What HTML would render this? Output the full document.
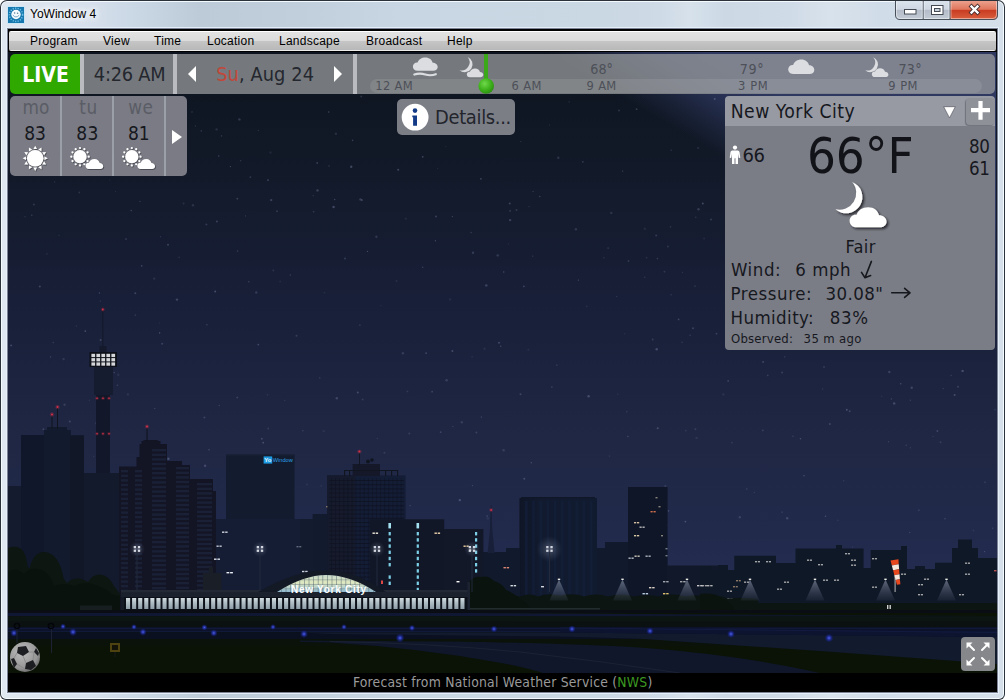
<!DOCTYPE html>
<html lang="en">
<head>
<meta charset="utf-8">
<title>YoWindow 4</title>
<style>
html,body{margin:0;padding:0;}
body{width:1005px;height:700px;overflow:hidden;position:relative;background:#fff;font-family:"Liberation Sans",sans-serif;}
.abs{position:absolute;}
#frame{left:0;top:0;width:1005px;height:700px;box-sizing:border-box;border-radius:7px 7px 6px 6px;
 background:linear-gradient(to right,#dfe7f0 0px,#d6e0ec 90px,#cbd8e5 130px,#bdcbd9 200px,#c1cfdd 300px,#c8d5e2 400px,#cad8e4 600px,#cedae6 660px,#d6e1eb 690px,#ccd9e5 725px,#cfdbe7 790px,#d8e2ec 830px,#d0dce8 880px,#d4dfea 1005px);
 box-shadow:inset 0 0 0 1px #2c323a, inset 0 0 0 2px rgba(246,251,255,.95);}
#title{left:30px;top:6px;font-size:12px;line-height:16px;color:#000;text-shadow:0 0 6px #fff,0 0 6px #fff,0 0 10px #fff;white-space:nowrap;}
#client{left:8px;top:29px;width:989px;height:663px;background:#000;box-shadow:0 0 0 1px #7a8294,0 0 0 2px rgba(232,242,252,.9);}
#menubar{left:9px;top:31px;width:987px;height:20px;border-radius:2px;
 background:linear-gradient(#fff 0,#fff 1px,#e2e2e2 1px,#dbdbdb 10px,#c6c6c6 10px,#b8b8b8 19px,#ececec 19px,#ececec 20px);}
#menubar span{position:absolute;top:3px;font-size:12px;line-height:14px;color:#000;white-space:nowrap;letter-spacing:.25px;}
.app{font-family:"DejaVu Sans Condensed","Liberation Sans",sans-serif;white-space:nowrap;}
</style>
</head>
<body>
<div id="frame" class="abs"></div>
<svg class="abs" style="left:890px;top:0" width="115" height="24" viewBox="890 0 115 24">
<defs>
<linearGradient id="wbg" x1="0" y1="0" x2="0" y2="1"><stop offset="0" stop-color="#dbe3ec"/><stop offset=".45" stop-color="#ced7e2"/><stop offset=".5" stop-color="#b3bcc8"/><stop offset="1" stop-color="#c3ccd6"/></linearGradient>
<linearGradient id="wbr" x1="0" y1="0" x2="0" y2="1"><stop offset="0" stop-color="#eba08c"/><stop offset=".45" stop-color="#df765c"/><stop offset=".5" stop-color="#c93c22"/><stop offset="1" stop-color="#d9603e"/></linearGradient>
</defs>
<path d="M895.500 1 V15 Q895.500 19.500 900 19.500 H950 V1 Z" fill="url(#wbg)"/>
<path d="M950 1 H997.500 V15 Q997.500 19.500 993 19.500 H950 Z" fill="url(#wbr)"/>
<path d="M895.500 1 V15 Q895.500 19.500 900 19.500 H993 Q997.500 19.500 997.500 15 V1 M923.200 1 V19.500 M950 1 V19.500" fill="none" stroke="#474f5b" stroke-width="1"/>
<path d="M896.500 1.500 V15 Q896.500 18.500 900 18.500 H922.200 V1.500 M924.200 1.500 V18.500 H949 V1.500 M951 1.500 V18.500 H993 Q996.500 18.500 996.500 15 V1.500" fill="none" stroke="#fff" stroke-opacity=".45" stroke-width="1"/>
<rect x="904.500" y="9.500" width="11.500" height="4.500" fill="#fff" stroke="#444a54" stroke-width="1"/>
<rect x="931.500" y="5.500" width="11.500" height="9" fill="#fff" stroke="#444a54" stroke-width="1"/>
<rect x="934.500" y="8.500" width="5.500" height="3" fill="#c8d0da" stroke="#444a54" stroke-width="1"/>
<path d="M971.500 6.500 L977.500 12.500 M977.500 6.500 L971.500 12.500" stroke="#4a3030" stroke-width="4.200" stroke-linecap="square"/>
<path d="M971.500 6.500 L977.500 12.500 M977.500 6.500 L971.500 12.500" stroke="#fff" stroke-width="2.400" stroke-linecap="square"/>
</svg>

<svg class="abs" style="left:7px;top:6px" width="18" height="18" viewBox="7 6 18 18">
<rect x="7.300" y="6.300" width="17.400" height="17.400" fill="#bfe6f8" opacity=".9"/>
<rect x="8" y="7" width="16" height="16" fill="#1577ad"/>
<circle cx="16" cy="14.800" r="6.600" fill="none" stroke="#6ec0e6" stroke-width="1.500" stroke-dasharray="1.200 1.300"/>
<circle cx="16" cy="14.500" r="4.700" fill="#f4fbff"/>
<circle cx="14.600" cy="13" r=".8" fill="#5a7f98"/><circle cx="17.600" cy="13.300" r=".8" fill="#5a7f98"/>
<path d="M12.800 15 Q15.800 18.800 19.200 15.200" fill="none" stroke="#7aa8c4" stroke-width="1"/>
</svg>

<div id="title" class="abs">YoWindow 4</div>
<div id="client" class="abs"></div>
<div id="menubar" class="abs">
 <span style="left:21px">Program</span>
 <span style="left:94px">View</span>
 <span style="left:145px">Time</span>
 <span style="left:198px">Location</span>
 <span style="left:270px">Landscape</span>
 <span style="left:357px">Broadcast</span>
 <span style="left:438px">Help</span>
</div>
<svg class="abs" style="left:8px;top:52px" width="989" height="640" viewBox="8 52 989 640">
<defs>
<linearGradient id="sky" x1="0" y1="51" x2="0" y2="612" gradientUnits="userSpaceOnUse">
<stop offset="0" stop-color="#0e141f"/><stop offset="0.176" stop-color="#111927"/><stop offset="0.444" stop-color="#181f38"/><stop offset="0.693" stop-color="#1f2744"/><stop offset="0.861" stop-color="#222a4c"/><stop offset="1" stop-color="#242d52"/></linearGradient>
<linearGradient id="glow" x1="633.9" y1="104.3" x2="675.7" y2="33.800" gradientUnits="userSpaceOnUse">
<stop offset="0" stop-color="#2e3860" stop-opacity="0"/><stop offset="0.25" stop-color="#2e3860" stop-opacity=".3"/><stop offset="0.6" stop-color="#2e3860" stop-opacity=".75"/><stop offset="1" stop-color="#2e3860" stop-opacity="1"/></linearGradient>
<linearGradient id="gnd" x1="0" y1="610" x2="0" y2="673" gradientUnits="userSpaceOnUse">
<stop offset="0" stop-color="#0c1412"/><stop offset="1" stop-color="#0a0f0c"/></linearGradient>
<radialGradient id="lamp"><stop offset="0" stop-color="#cfd8e8" stop-opacity=".3"/><stop offset="1" stop-color="#8090b0" stop-opacity="0"/></radialGradient>
<radialGradient id="blue"><stop offset="0" stop-color="#5562e0" stop-opacity="1"/><stop offset=".3" stop-color="#3040c8" stop-opacity=".85"/><stop offset=".7" stop-color="#1a2898" stop-opacity=".45"/><stop offset="1" stop-color="#101a80" stop-opacity="0"/></radialGradient>
<linearGradient id="cone" x1="0" y1="0" x2="0" y2="1"><stop offset="0" stop-color="#9aa4b8" stop-opacity=".6"/><stop offset="1" stop-color="#5f6a85" stop-opacity=".12"/></linearGradient>
</defs>
<rect x="8" y="51" width="989" height="641" fill="url(#sky)"/>
<rect x="9" y="51" width="987" height="400" fill="url(#glow)"/>
<g><circle cx="329.0" cy="166.0" r="0.7" fill="#9aa4cc" opacity="0.26"/><circle cx="819.0" cy="139.7" r="1.2" fill="#9aa4cc" opacity="0.24"/><circle cx="221.5" cy="135.9" r="0.8" fill="#9aa4cc" opacity="0.20"/><circle cx="99.4" cy="293.0" r="0.7" fill="#9aa4cc" opacity="0.30"/><circle cx="943.2" cy="388.6" r="0.7" fill="#9aa4cc" opacity="0.24"/><circle cx="578.4" cy="280.1" r="0.7" fill="#9aa4cc" opacity="0.33"/><circle cx="558.3" cy="157.8" r="1.2" fill="#9aa4cc" opacity="0.20"/><circle cx="126.0" cy="239.1" r="0.8" fill="#9aa4cc" opacity="0.30"/><circle cx="111.5" cy="361.0" r="0.7" fill="#9aa4cc" opacity="0.15"/><circle cx="549.5" cy="125.1" r="0.8" fill="#9aa4cc" opacity="0.11"/><circle cx="499.0" cy="342.7" r="1.0" fill="#9aa4cc" opacity="0.29"/><circle cx="586.8" cy="306.3" r="0.8" fill="#9aa4cc" opacity="0.17"/><circle cx="698.5" cy="209.3" r="1.2" fill="#9aa4cc" opacity="0.24"/><circle cx="497.7" cy="255.4" r="1.2" fill="#9aa4cc" opacity="0.21"/><circle cx="975.5" cy="150.8" r="0.9" fill="#9aa4cc" opacity="0.20"/><circle cx="159.7" cy="322.9" r="0.7" fill="#9aa4cc" opacity="0.11"/><circle cx="763.1" cy="361.9" r="0.9" fill="#9aa4cc" opacity="0.31"/><circle cx="345.0" cy="258.5" r="1.0" fill="#9aa4cc" opacity="0.22"/><circle cx="77.7" cy="139.4" r="0.7" fill="#9aa4cc" opacity="0.16"/><circle cx="69.8" cy="421.5" r="1.0" fill="#9aa4cc" opacity="0.26"/><circle cx="290.3" cy="275.0" r="0.7" fill="#9aa4cc" opacity="0.26"/><circle cx="936.5" cy="260.9" r="1.0" fill="#9aa4cc" opacity="0.25"/><circle cx="68.1" cy="452.5" r="0.8" fill="#9aa4cc" opacity="0.13"/><circle cx="401.9" cy="521.4" r="0.8" fill="#9aa4cc" opacity="0.22"/><circle cx="452.4" cy="350.9" r="1.0" fill="#9aa4cc" opacity="0.31"/><circle cx="861.0" cy="225.2" r="0.9" fill="#9aa4cc" opacity="0.20"/><circle cx="682.5" cy="272.5" r="0.7" fill="#9aa4cc" opacity="0.16"/><circle cx="183.6" cy="203.6" r="1.0" fill="#9aa4cc" opacity="0.16"/><circle cx="828.6" cy="180.6" r="0.8" fill="#9aa4cc" opacity="0.17"/><circle cx="422.7" cy="267.3" r="0.8" fill="#9aa4cc" opacity="0.24"/><circle cx="690.1" cy="335.2" r="0.7" fill="#9aa4cc" opacity="0.25"/><circle cx="459.8" cy="500.1" r="1.2" fill="#9aa4cc" opacity="0.33"/><circle cx="396.5" cy="281.1" r="1.0" fill="#9aa4cc" opacity="0.12"/><circle cx="71.3" cy="127.2" r="0.8" fill="#9aa4cc" opacity="0.15"/><circle cx="118.3" cy="374.7" r="1.2" fill="#9aa4cc" opacity="0.12"/><circle cx="159.0" cy="143.1" r="0.7" fill="#9aa4cc" opacity="0.19"/><circle cx="79.3" cy="192.5" r="0.9" fill="#9aa4cc" opacity="0.19"/><circle cx="951.1" cy="375.5" r="0.7" fill="#9aa4cc" opacity="0.21"/><circle cx="846.2" cy="556.8" r="1.0" fill="#9aa4cc" opacity="0.21"/><circle cx="317.2" cy="162.9" r="0.9" fill="#9aa4cc" opacity="0.28"/><circle cx="481.4" cy="417.1" r="0.8" fill="#9aa4cc" opacity="0.22"/><circle cx="946.7" cy="341.1" r="1.2" fill="#9aa4cc" opacity="0.14"/><circle cx="910.4" cy="447.8" r="0.7" fill="#9aa4cc" opacity="0.17"/><circle cx="695.8" cy="217.2" r="0.8" fill="#9aa4cc" opacity="0.19"/><circle cx="360.4" cy="199.4" r="1.2" fill="#9aa4cc" opacity="0.23"/><circle cx="334.7" cy="199.5" r="0.8" fill="#9aa4cc" opacity="0.29"/><circle cx="804.0" cy="475.7" r="0.8" fill="#9aa4cc" opacity="0.28"/><circle cx="206.9" cy="324.7" r="0.7" fill="#9aa4cc" opacity="0.28"/><circle cx="788.3" cy="315.1" r="1.2" fill="#9aa4cc" opacity="0.15"/><circle cx="952.2" cy="303.5" r="0.9" fill="#9aa4cc" opacity="0.32"/><circle cx="950.7" cy="265.2" r="0.8" fill="#9aa4cc" opacity="0.15"/><circle cx="473.0" cy="252.7" r="1.2" fill="#9aa4cc" opacity="0.22"/><circle cx="837.8" cy="318.5" r="0.7" fill="#9aa4cc" opacity="0.26"/><circle cx="832.1" cy="151.6" r="0.8" fill="#9aa4cc" opacity="0.19"/><circle cx="480.9" cy="178.8" r="0.9" fill="#9aa4cc" opacity="0.29"/><circle cx="95.4" cy="535.0" r="1.0" fill="#9aa4cc" opacity="0.27"/><circle cx="405.4" cy="535.3" r="0.8" fill="#9aa4cc" opacity="0.27"/><circle cx="988.2" cy="108.8" r="1.0" fill="#9aa4cc" opacity="0.24"/><circle cx="804.4" cy="163.8" r="1.0" fill="#9aa4cc" opacity="0.30"/><circle cx="657.4" cy="258.6" r="0.8" fill="#9aa4cc" opacity="0.23"/><circle cx="31.1" cy="466.9" r="0.7" fill="#9aa4cc" opacity="0.27"/><circle cx="528.7" cy="529.2" r="0.8" fill="#9aa4cc" opacity="0.20"/><circle cx="823.8" cy="193.9" r="0.9" fill="#9aa4cc" opacity="0.16"/><circle cx="503.6" cy="450.3" r="1.2" fill="#9aa4cc" opacity="0.18"/><circle cx="422.7" cy="156.8" r="0.9" fill="#9aa4cc" opacity="0.32"/><circle cx="894.2" cy="403.4" r="1.2" fill="#9aa4cc" opacity="0.30"/><circle cx="424.3" cy="521.8" r="1.2" fill="#9aa4cc" opacity="0.22"/><circle cx="159.6" cy="332.9" r="0.8" fill="#9aa4cc" opacity="0.31"/><circle cx="609.4" cy="456.1" r="0.8" fill="#9aa4cc" opacity="0.14"/><circle cx="476.4" cy="432.5" r="0.9" fill="#9aa4cc" opacity="0.23"/><circle cx="682.1" cy="342.3" r="0.7" fill="#9aa4cc" opacity="0.22"/><circle cx="880.0" cy="122.4" r="0.7" fill="#9aa4cc" opacity="0.15"/><circle cx="770.7" cy="331.6" r="0.7" fill="#9aa4cc" opacity="0.23"/><circle cx="446.6" cy="380.2" r="1.2" fill="#9aa4cc" opacity="0.22"/><circle cx="206.4" cy="224.6" r="1.0" fill="#9aa4cc" opacity="0.22"/><circle cx="510.1" cy="210.9" r="0.9" fill="#9aa4cc" opacity="0.23"/><circle cx="918.9" cy="510.2" r="1.0" fill="#9aa4cc" opacity="0.15"/><circle cx="145.1" cy="152.4" r="0.7" fill="#9aa4cc" opacity="0.21"/><circle cx="671.1" cy="294.7" r="0.9" fill="#9aa4cc" opacity="0.15"/><circle cx="782.2" cy="512.2" r="0.9" fill="#9aa4cc" opacity="0.14"/><circle cx="150.8" cy="505.6" r="0.8" fill="#9aa4cc" opacity="0.33"/><circle cx="745.5" cy="139.7" r="0.8" fill="#9aa4cc" opacity="0.31"/><circle cx="985.0" cy="482.3" r="1.0" fill="#9aa4cc" opacity="0.14"/><circle cx="989.2" cy="283.4" r="0.9" fill="#9aa4cc" opacity="0.20"/><circle cx="323.7" cy="431.1" r="1.2" fill="#9aa4cc" opacity="0.10"/><circle cx="461.8" cy="422.3" r="1.2" fill="#9aa4cc" opacity="0.19"/><circle cx="624.6" cy="333.7" r="0.8" fill="#9aa4cc" opacity="0.12"/><circle cx="967.1" cy="144.6" r="0.7" fill="#9aa4cc" opacity="0.16"/><circle cx="902.3" cy="180.2" r="1.0" fill="#9aa4cc" opacity="0.28"/><circle cx="846.8" cy="409.7" r="1.0" fill="#9aa4cc" opacity="0.33"/><circle cx="157.1" cy="522.5" r="0.9" fill="#9aa4cc" opacity="0.24"/><circle cx="98.1" cy="122.7" r="1.0" fill="#9aa4cc" opacity="0.27"/><circle cx="891.9" cy="220.8" r="0.7" fill="#9aa4cc" opacity="0.10"/><circle cx="799.6" cy="134.9" r="0.7" fill="#9aa4cc" opacity="0.31"/><circle cx="270.5" cy="152.5" r="1.2" fill="#9aa4cc" opacity="0.10"/><circle cx="421.5" cy="520.8" r="0.7" fill="#9aa4cc" opacity="0.25"/><circle cx="529.0" cy="206.6" r="0.8" fill="#9aa4cc" opacity="0.13"/><circle cx="268.0" cy="180.1" r="0.9" fill="#9aa4cc" opacity="0.32"/><circle cx="533.1" cy="191.5" r="0.8" fill="#9aa4cc" opacity="0.21"/><circle cx="276.5" cy="468.9" r="0.7" fill="#9aa4cc" opacity="0.34"/><circle cx="25.1" cy="436.1" r="0.8" fill="#9aa4cc" opacity="0.23"/><circle cx="516.5" cy="210.0" r="1.0" fill="#9aa4cc" opacity="0.21"/><circle cx="656.7" cy="349.3" r="1.2" fill="#9aa4cc" opacity="0.31"/><circle cx="313.2" cy="195.8" r="0.8" fill="#9aa4cc" opacity="0.16"/><circle cx="829.8" cy="423.9" r="1.0" fill="#9aa4cc" opacity="0.25"/><circle cx="984.6" cy="551.6" r="0.7" fill="#9aa4cc" opacity="0.30"/><circle cx="79.7" cy="439.8" r="0.8" fill="#9aa4cc" opacity="0.16"/><circle cx="64.6" cy="404.7" r="1.2" fill="#9aa4cc" opacity="0.19"/><circle cx="670.5" cy="226.8" r="0.9" fill="#9aa4cc" opacity="0.16"/><circle cx="54.6" cy="182.0" r="0.7" fill="#9aa4cc" opacity="0.16"/><circle cx="269.3" cy="542.3" r="1.2" fill="#9aa4cc" opacity="0.33"/><circle cx="328.7" cy="112.0" r="0.8" fill="#9aa4cc" opacity="0.31"/><circle cx="361.2" cy="96.5" r="1.0" fill="#9aa4cc" opacity="0.19"/><circle cx="284.7" cy="400.4" r="0.7" fill="#9aa4cc" opacity="0.16"/><circle cx="99.5" cy="475.1" r="1.2" fill="#9aa4cc" opacity="0.13"/><circle cx="51.0" cy="106.4" r="0.8" fill="#9aa4cc" opacity="0.17"/><circle cx="93.2" cy="540.3" r="0.8" fill="#9aa4cc" opacity="0.30"/><circle cx="657.7" cy="428.2" r="1.0" fill="#9aa4cc" opacity="0.31"/><circle cx="762.8" cy="430.4" r="0.9" fill="#9aa4cc" opacity="0.22"/><circle cx="723.3" cy="394.5" r="1.2" fill="#9aa4cc" opacity="0.11"/><circle cx="627.9" cy="436.5" r="0.8" fill="#9aa4cc" opacity="0.29"/><circle cx="906.2" cy="445.3" r="0.7" fill="#9aa4cc" opacity="0.24"/><circle cx="824.0" cy="367.0" r="0.8" fill="#9aa4cc" opacity="0.31"/><circle cx="93.8" cy="115.4" r="0.7" fill="#9aa4cc" opacity="0.25"/><circle cx="381.0" cy="305.4" r="0.7" fill="#9aa4cc" opacity="0.11"/><circle cx="626.8" cy="411.8" r="0.7" fill="#9aa4cc" opacity="0.22"/><circle cx="460.1" cy="128.5" r="1.2" fill="#9aa4cc" opacity="0.32"/><circle cx="100.6" cy="340.1" r="1.0" fill="#9aa4cc" opacity="0.28"/><circle cx="258.4" cy="130.5" r="0.8" fill="#9aa4cc" opacity="0.16"/><circle cx="237.3" cy="397.6" r="1.0" fill="#9aa4cc" opacity="0.21"/><circle cx="85.6" cy="518.5" r="0.7" fill="#9aa4cc" opacity="0.17"/><circle cx="617.7" cy="394.2" r="0.8" fill="#9aa4cc" opacity="0.12"/><circle cx="336.8" cy="398.3" r="1.2" fill="#9aa4cc" opacity="0.27"/><circle cx="569.2" cy="101.8" r="0.9" fill="#9aa4cc" opacity="0.11"/><circle cx="967.9" cy="142.2" r="1.0" fill="#9aa4cc" opacity="0.15"/><circle cx="296.5" cy="335.7" r="1.0" fill="#9aa4cc" opacity="0.21"/><circle cx="765.7" cy="556.9" r="0.9" fill="#9aa4cc" opacity="0.23"/><circle cx="973.5" cy="530.4" r="1.0" fill="#9aa4cc" opacity="0.10"/><circle cx="85.3" cy="331.1" r="0.9" fill="#9aa4cc" opacity="0.34"/><circle cx="391.0" cy="521.3" r="0.7" fill="#9aa4cc" opacity="0.32"/><circle cx="582.8" cy="161.8" r="0.9" fill="#9aa4cc" opacity="0.23"/><circle cx="140.6" cy="476.6" r="0.7" fill="#9aa4cc" opacity="0.22"/><circle cx="702.8" cy="203.4" r="1.0" fill="#9aa4cc" opacity="0.32"/><circle cx="398.2" cy="169.8" r="1.0" fill="#9aa4cc" opacity="0.33"/><circle cx="409.3" cy="433.4" r="1.0" fill="#9aa4cc" opacity="0.20"/><circle cx="321.3" cy="485.9" r="0.9" fill="#9aa4cc" opacity="0.10"/><circle cx="836.5" cy="151.7" r="0.7" fill="#9aa4cc" opacity="0.32"/><circle cx="898.0" cy="230.5" r="1.0" fill="#9aa4cc" opacity="0.19"/><circle cx="394.3" cy="499.7" r="1.0" fill="#9aa4cc" opacity="0.12"/><circle cx="754.3" cy="492.4" r="0.7" fill="#9aa4cc" opacity="0.17"/><circle cx="832.2" cy="228.5" r="0.8" fill="#9aa4cc" opacity="0.32"/><circle cx="966.5" cy="298.4" r="0.9" fill="#9aa4cc" opacity="0.18"/><circle cx="783.4" cy="294.5" r="1.0" fill="#9aa4cc" opacity="0.11"/><circle cx="909.7" cy="532.5" r="0.7" fill="#9aa4cc" opacity="0.23"/><circle cx="58.7" cy="435.8" r="0.8" fill="#9aa4cc" opacity="0.21"/><circle cx="644.8" cy="228.8" r="1.2" fill="#9aa4cc" opacity="0.11"/><circle cx="135.4" cy="315.1" r="0.9" fill="#9aa4cc" opacity="0.18"/><circle cx="261.9" cy="438.8" r="1.0" fill="#9aa4cc" opacity="0.26"/><circle cx="656.2" cy="235.6" r="1.0" fill="#9aa4cc" opacity="0.23"/><circle cx="127.9" cy="394.4" r="1.2" fill="#9aa4cc" opacity="0.12"/><circle cx="902.4" cy="326.6" r="0.9" fill="#9aa4cc" opacity="0.15"/><circle cx="991.5" cy="304.8" r="0.8" fill="#9aa4cc" opacity="0.13"/><circle cx="250.4" cy="177.1" r="0.9" fill="#9aa4cc" opacity="0.23"/><circle cx="245.5" cy="215.9" r="0.7" fill="#9aa4cc" opacity="0.24"/><circle cx="748.4" cy="287.5" r="1.2" fill="#9aa4cc" opacity="0.20"/><circle cx="216.9" cy="221.4" r="1.0" fill="#9aa4cc" opacity="0.28"/><circle cx="283.4" cy="545.0" r="1.2" fill="#9aa4cc" opacity="0.13"/><circle cx="531.3" cy="462.7" r="0.7" fill="#9aa4cc" opacity="0.30"/><circle cx="277.0" cy="211.3" r="1.0" fill="#9aa4cc" opacity="0.20"/><circle cx="435.4" cy="240.8" r="0.7" fill="#9aa4cc" opacity="0.30"/><circle cx="135.3" cy="293.3" r="1.0" fill="#9aa4cc" opacity="0.28"/><circle cx="963.8" cy="323.3" r="1.2" fill="#9aa4cc" opacity="0.12"/><circle cx="852.6" cy="547.1" r="0.7" fill="#9aa4cc" opacity="0.16"/><circle cx="230.4" cy="166.6" r="0.7" fill="#9aa4cc" opacity="0.33"/><circle cx="937.4" cy="430.9" r="1.0" fill="#9aa4cc" opacity="0.26"/><circle cx="93.7" cy="456.5" r="0.8" fill="#9aa4cc" opacity="0.10"/><circle cx="239.1" cy="522.8" r="0.9" fill="#9aa4cc" opacity="0.25"/><circle cx="958.0" cy="386.7" r="1.0" fill="#9aa4cc" opacity="0.23"/><circle cx="698.1" cy="148.0" r="1.2" fill="#9aa4cc" opacity="0.12"/><circle cx="939.4" cy="184.9" r="1.2" fill="#9aa4cc" opacity="0.16"/><circle cx="11.1" cy="345.4" r="0.9" fill="#9aa4cc" opacity="0.34"/><circle cx="954.6" cy="395.1" r="1.0" fill="#9aa4cc" opacity="0.31"/><circle cx="528.4" cy="349.8" r="1.0" fill="#9aa4cc" opacity="0.11"/><circle cx="704.1" cy="238.6" r="1.0" fill="#9aa4cc" opacity="0.11"/><circle cx="881.6" cy="396.3" r="0.8" fill="#9aa4cc" opacity="0.12"/><circle cx="667.3" cy="525.3" r="0.7" fill="#9aa4cc" opacity="0.15"/><circle cx="695.4" cy="429.3" r="1.0" fill="#9aa4cc" opacity="0.19"/><circle cx="205.1" cy="465.8" r="1.2" fill="#9aa4cc" opacity="0.28"/><circle cx="76.4" cy="326.0" r="0.8" fill="#9aa4cc" opacity="0.15"/><circle cx="237.3" cy="198.7" r="0.9" fill="#9aa4cc" opacity="0.28"/><circle cx="117.4" cy="385.3" r="0.8" fill="#9aa4cc" opacity="0.25"/><circle cx="487.8" cy="518.4" r="1.2" fill="#9aa4cc" opacity="0.11"/><circle cx="154.2" cy="278.6" r="1.2" fill="#9aa4cc" opacity="0.15"/><circle cx="149.8" cy="120.1" r="1.0" fill="#9aa4cc" opacity="0.11"/><circle cx="452.9" cy="426.4" r="0.7" fill="#9aa4cc" opacity="0.18"/><circle cx="992.6" cy="528.3" r="0.8" fill="#9aa4cc" opacity="0.18"/><circle cx="652.7" cy="339.5" r="0.9" fill="#9aa4cc" opacity="0.21"/><circle cx="664.5" cy="271.7" r="0.9" fill="#9aa4cc" opacity="0.19"/><circle cx="445.8" cy="146.6" r="0.7" fill="#9aa4cc" opacity="0.12"/><circle cx="356.2" cy="539.4" r="0.8" fill="#9aa4cc" opacity="0.13"/><circle cx="384.4" cy="452.7" r="1.0" fill="#9aa4cc" opacity="0.17"/><circle cx="96.4" cy="423.2" r="1.2" fill="#9aa4cc" opacity="0.15"/><circle cx="915.7" cy="185.6" r="1.0" fill="#9aa4cc" opacity="0.19"/><circle cx="39.8" cy="286.6" r="1.0" fill="#9aa4cc" opacity="0.29"/><circle cx="50.0" cy="112.2" r="0.7" fill="#9aa4cc" opacity="0.12"/><circle cx="263.2" cy="442.7" r="0.9" fill="#9aa4cc" opacity="0.32"/><circle cx="367.5" cy="251.4" r="0.7" fill="#9aa4cc" opacity="0.33"/><circle cx="268.2" cy="428.5" r="0.9" fill="#9aa4cc" opacity="0.18"/><circle cx="302.9" cy="430.8" r="0.7" fill="#9aa4cc" opacity="0.24"/><circle cx="33.9" cy="204.5" r="1.0" fill="#9aa4cc" opacity="0.21"/><circle cx="949.6" cy="275.3" r="1.0" fill="#9aa4cc" opacity="0.16"/><circle cx="812.6" cy="157.6" r="0.7" fill="#9aa4cc" opacity="0.22"/><circle cx="800.5" cy="438.7" r="0.8" fill="#9aa4cc" opacity="0.30"/><circle cx="608.1" cy="248.1" r="0.9" fill="#9aa4cc" opacity="0.18"/><circle cx="782.1" cy="372.4" r="1.0" fill="#9aa4cc" opacity="0.22"/><circle cx="751.6" cy="210.8" r="0.7" fill="#9aa4cc" opacity="0.12"/><circle cx="484.5" cy="348.7" r="1.0" fill="#9aa4cc" opacity="0.14"/><circle cx="880.2" cy="554.4" r="0.7" fill="#9aa4cc" opacity="0.16"/><circle cx="215.2" cy="291.4" r="1.0" fill="#9aa4cc" opacity="0.34"/><circle cx="180.6" cy="157.7" r="0.8" fill="#9aa4cc" opacity="0.21"/><circle cx="746.8" cy="489.0" r="0.7" fill="#9aa4cc" opacity="0.26"/><circle cx="778.1" cy="232.4" r="0.9" fill="#9aa4cc" opacity="0.17"/><circle cx="377.4" cy="438.5" r="0.8" fill="#9aa4cc" opacity="0.15"/><circle cx="193.0" cy="205.3" r="1.2" fill="#9aa4cc" opacity="0.17"/><circle cx="195.4" cy="126.1" r="0.8" fill="#9aa4cc" opacity="0.16"/><circle cx="509.7" cy="203.4" r="1.0" fill="#9aa4cc" opacity="0.29"/><circle cx="986.1" cy="143.5" r="0.8" fill="#9aa4cc" opacity="0.21"/><circle cx="837.9" cy="520.3" r="0.9" fill="#9aa4cc" opacity="0.11"/><circle cx="239.4" cy="119.4" r="1.2" fill="#9aa4cc" opacity="0.24"/><circle cx="201.2" cy="130.9" r="0.8" fill="#9aa4cc" opacity="0.22"/><circle cx="452.4" cy="216.6" r="0.7" fill="#9aa4cc" opacity="0.29"/><circle cx="114.2" cy="372.6" r="0.8" fill="#9aa4cc" opacity="0.25"/><circle cx="46.9" cy="253.8" r="0.9" fill="#9aa4cc" opacity="0.11"/><circle cx="47.7" cy="435.8" r="0.7" fill="#9aa4cc" opacity="0.32"/><circle cx="816.6" cy="285.8" r="1.2" fill="#9aa4cc" opacity="0.19"/><circle cx="317.5" cy="190.4" r="1.2" fill="#9aa4cc" opacity="0.29"/><circle cx="486.3" cy="285.4" r="1.2" fill="#9aa4cc" opacity="0.29"/><circle cx="162.2" cy="343.8" r="1.0" fill="#9aa4cc" opacity="0.26"/><circle cx="695.0" cy="286.1" r="0.9" fill="#9aa4cc" opacity="0.17"/><circle cx="421.6" cy="119.8" r="0.9" fill="#9aa4cc" opacity="0.28"/><circle cx="417.9" cy="104.5" r="0.9" fill="#9aa4cc" opacity="0.28"/><circle cx="644.8" cy="277.3" r="0.7" fill="#9aa4cc" opacity="0.20"/><circle cx="437.7" cy="168.6" r="0.7" fill="#9aa4cc" opacity="0.13"/><circle cx="410.1" cy="505.6" r="0.8" fill="#9aa4cc" opacity="0.21"/><circle cx="138.0" cy="120.0" r="1.0" fill="#9aa4cc" opacity="0.13"/><circle cx="97.7" cy="384.7" r="1.2" fill="#9aa4cc" opacity="0.19"/><circle cx="179.1" cy="257.4" r="0.8" fill="#9aa4cc" opacity="0.14"/><circle cx="921.6" cy="146.5" r="0.8" fill="#9aa4cc" opacity="0.22"/><circle cx="307.1" cy="484.5" r="1.0" fill="#9aa4cc" opacity="0.11"/><circle cx="319.8" cy="377.9" r="0.7" fill="#9aa4cc" opacity="0.25"/><circle cx="900.7" cy="383.8" r="0.8" fill="#9aa4cc" opacity="0.30"/><circle cx="640.7" cy="493.5" r="1.2" fill="#9aa4cc" opacity="0.25"/><circle cx="843.7" cy="480.7" r="0.8" fill="#9aa4cc" opacity="0.14"/><circle cx="51.1" cy="531.5" r="0.9" fill="#9aa4cc" opacity="0.14"/><circle cx="131.2" cy="210.6" r="0.8" fill="#9aa4cc" opacity="0.27"/><circle cx="50.5" cy="356.9" r="0.7" fill="#9aa4cc" opacity="0.28"/><circle cx="667.9" cy="246.4" r="1.0" fill="#9aa4cc" opacity="0.19"/><circle cx="551.8" cy="386.9" r="1.0" fill="#9aa4cc" opacity="0.17"/><circle cx="313.6" cy="211.7" r="0.9" fill="#9aa4cc" opacity="0.19"/><circle cx="450.1" cy="299.4" r="1.2" fill="#9aa4cc" opacity="0.11"/><circle cx="981.3" cy="311.9" r="1.2" fill="#9aa4cc" opacity="0.21"/><circle cx="778.3" cy="308.6" r="1.0" fill="#9aa4cc" opacity="0.14"/><circle cx="404.3" cy="127.1" r="0.9" fill="#9aa4cc" opacity="0.19"/><circle cx="100.3" cy="301.1" r="0.7" fill="#9aa4cc" opacity="0.22"/><circle cx="50.0" cy="156.4" r="0.9" fill="#9aa4cc" opacity="0.32"/><circle cx="776.0" cy="333.3" r="1.2" fill="#9aa4cc" opacity="0.11"/><circle cx="891.4" cy="398.9" r="0.7" fill="#9aa4cc" opacity="0.29"/><circle cx="854.2" cy="558.2" r="0.7" fill="#9aa4cc" opacity="0.28"/><circle cx="200.8" cy="551.5" r="0.8" fill="#9aa4cc" opacity="0.22"/><circle cx="685.8" cy="430.6" r="0.9" fill="#9aa4cc" opacity="0.15"/><circle cx="611.3" cy="213.0" r="1.2" fill="#9aa4cc" opacity="0.18"/><circle cx="280.9" cy="474.5" r="1.2" fill="#9aa4cc" opacity="0.13"/><circle cx="959.9" cy="318.8" r="1.2" fill="#9aa4cc" opacity="0.24"/><circle cx="508.4" cy="244.1" r="0.8" fill="#9aa4cc" opacity="0.11"/><circle cx="407.4" cy="391.4" r="0.9" fill="#9aa4cc" opacity="0.17"/><circle cx="892.0" cy="174.3" r="0.7" fill="#9aa4cc" opacity="0.29"/><circle cx="766.7" cy="118.5" r="1.0" fill="#9aa4cc" opacity="0.31"/><circle cx="556.9" cy="365.1" r="0.7" fill="#9aa4cc" opacity="0.31"/><circle cx="258.3" cy="344.6" r="0.9" fill="#9aa4cc" opacity="0.31"/><circle cx="270.8" cy="555.6" r="0.9" fill="#9aa4cc" opacity="0.24"/><circle cx="335.9" cy="133.8" r="1.2" fill="#9aa4cc" opacity="0.16"/><circle cx="742.4" cy="118.4" r="0.9" fill="#9aa4cc" opacity="0.30"/><circle cx="315.4" cy="544.2" r="0.9" fill="#9aa4cc" opacity="0.31"/><circle cx="732.0" cy="442.7" r="0.9" fill="#9aa4cc" opacity="0.15"/><circle cx="616.8" cy="296.6" r="0.7" fill="#9aa4cc" opacity="0.22"/><circle cx="140.0" cy="201.4" r="0.7" fill="#9aa4cc" opacity="0.26"/><circle cx="63.6" cy="359.1" r="1.2" fill="#9aa4cc" opacity="0.17"/><circle cx="361.8" cy="200.1" r="1.2" fill="#9aa4cc" opacity="0.24"/><circle cx="141.7" cy="265.9" r="0.8" fill="#9aa4cc" opacity="0.30"/><circle cx="142.7" cy="530.6" r="0.8" fill="#9aa4cc" opacity="0.16"/><circle cx="454.1" cy="125.5" r="0.9" fill="#9aa4cc" opacity="0.13"/><circle cx="405.9" cy="218.6" r="1.2" fill="#9aa4cc" opacity="0.10"/><circle cx="889.3" cy="372.0" r="1.2" fill="#9aa4cc" opacity="0.24"/><circle cx="933.1" cy="436.4" r="0.7" fill="#9aa4cc" opacity="0.16"/><circle cx="53.3" cy="342.6" r="0.8" fill="#9aa4cc" opacity="0.20"/><circle cx="166.8" cy="519.0" r="1.2" fill="#9aa4cc" opacity="0.13"/><circle cx="552.7" cy="532.6" r="0.8" fill="#9aa4cc" opacity="0.13"/><circle cx="520.5" cy="394.2" r="1.0" fill="#9aa4cc" opacity="0.26"/><circle cx="811.2" cy="177.0" r="0.9" fill="#9aa4cc" opacity="0.17"/><circle cx="626.6" cy="557.2" r="1.0" fill="#9aa4cc" opacity="0.27"/><circle cx="714.7" cy="98.9" r="1.0" fill="#9aa4cc" opacity="0.30"/><circle cx="89.3" cy="400.2" r="0.7" fill="#9aa4cc" opacity="0.14"/><circle cx="267.5" cy="394.8" r="0.9" fill="#9aa4cc" opacity="0.13"/><circle cx="711.0" cy="219.4" r="1.0" fill="#9aa4cc" opacity="0.23"/><circle cx="685.4" cy="521.6" r="0.9" fill="#9aa4cc" opacity="0.33"/><circle cx="642.4" cy="543.8" r="1.2" fill="#9aa4cc" opacity="0.15"/><circle cx="25.0" cy="216.8" r="0.8" fill="#9aa4cc" opacity="0.16"/><circle cx="940.5" cy="442.2" r="1.0" fill="#9aa4cc" opacity="0.18"/><circle cx="333.6" cy="207.0" r="1.2" fill="#9aa4cc" opacity="0.32"/><circle cx="472.5" cy="485.6" r="0.7" fill="#9aa4cc" opacity="0.27"/><circle cx="440.7" cy="432.2" r="0.9" fill="#9aa4cc" opacity="0.24"/><circle cx="787.4" cy="277.7" r="1.2" fill="#9aa4cc" opacity="0.24"/><circle cx="907.1" cy="163.1" r="0.7" fill="#9aa4cc" opacity="0.11"/><circle cx="622.6" cy="171.1" r="0.7" fill="#9aa4cc" opacity="0.33"/><circle cx="40.4" cy="160.2" r="0.7" fill="#9aa4cc" opacity="0.25"/><circle cx="696.6" cy="437.9" r="1.2" fill="#9aa4cc" opacity="0.12"/><circle cx="760.3" cy="188.5" r="1.2" fill="#9aa4cc" opacity="0.33"/><circle cx="887.9" cy="126.6" r="1.0" fill="#9aa4cc" opacity="0.31"/><circle cx="115.5" cy="191.5" r="0.7" fill="#9aa4cc" opacity="0.13"/><circle cx="945.0" cy="518.8" r="0.7" fill="#9aa4cc" opacity="0.28"/><circle cx="822.7" cy="389.0" r="0.7" fill="#9aa4cc" opacity="0.17"/><circle cx="140.7" cy="463.5" r="0.9" fill="#9aa4cc" opacity="0.26"/><circle cx="324.4" cy="292.6" r="0.9" fill="#9aa4cc" opacity="0.11"/><circle cx="926.1" cy="118.5" r="0.9" fill="#9aa4cc" opacity="0.28"/><circle cx="767.7" cy="375.3" r="0.9" fill="#9aa4cc" opacity="0.21"/><circle cx="619.0" cy="110.4" r="1.0" fill="#9aa4cc" opacity="0.20"/><circle cx="520.8" cy="141.6" r="0.7" fill="#9aa4cc" opacity="0.21"/><circle cx="539.8" cy="196.5" r="0.7" fill="#9aa4cc" opacity="0.31"/><circle cx="575.9" cy="229.2" r="1.2" fill="#9aa4cc" opacity="0.20"/><circle cx="209.0" cy="449.7" r="0.7" fill="#9aa4cc" opacity="0.33"/><circle cx="352.6" cy="140.4" r="0.8" fill="#9aa4cc" opacity="0.27"/><circle cx="962.6" cy="370.9" r="1.2" fill="#9aa4cc" opacity="0.33"/><circle cx="266.7" cy="534.0" r="0.8" fill="#9aa4cc" opacity="0.17"/><circle cx="934.2" cy="203.4" r="0.7" fill="#9aa4cc" opacity="0.14"/><circle cx="492.9" cy="555.9" r="0.7" fill="#9aa4cc" opacity="0.23"/><circle cx="628.5" cy="261.0" r="1.0" fill="#9aa4cc" opacity="0.20"/><circle cx="888.5" cy="441.8" r="0.7" fill="#9aa4cc" opacity="0.20"/><circle cx="376.4" cy="236.7" r="1.2" fill="#9aa4cc" opacity="0.20"/><circle cx="503.7" cy="272.0" r="0.8" fill="#9aa4cc" opacity="0.31"/><circle cx="939.8" cy="154.9" r="1.2" fill="#9aa4cc" opacity="0.24"/><circle cx="646.6" cy="257.7" r="0.8" fill="#9aa4cc" opacity="0.18"/><circle cx="865.0" cy="304.9" r="0.9" fill="#9aa4cc" opacity="0.23"/><circle cx="177.0" cy="299.6" r="1.2" fill="#9aa4cc" opacity="0.29"/><circle cx="237.6" cy="251.0" r="0.8" fill="#9aa4cc" opacity="0.25"/><circle cx="510.1" cy="220.1" r="1.2" fill="#9aa4cc" opacity="0.28"/><circle cx="162.3" cy="168.4" r="0.9" fill="#9aa4cc" opacity="0.16"/><circle cx="603.9" cy="257.8" r="0.8" fill="#9aa4cc" opacity="0.16"/><circle cx="264.8" cy="539.1" r="0.8" fill="#9aa4cc" opacity="0.34"/><circle cx="957.9" cy="143.2" r="0.8" fill="#9aa4cc" opacity="0.19"/><circle cx="793.0" cy="436.2" r="0.8" fill="#9aa4cc" opacity="0.20"/><circle cx="117.6" cy="518.9" r="1.0" fill="#9aa4cc" opacity="0.17"/><circle cx="467.0" cy="101.9" r="1.0" fill="#9aa4cc" opacity="0.31"/><circle cx="693.0" cy="328.2" r="1.0" fill="#9aa4cc" opacity="0.25"/><circle cx="31.8" cy="215.3" r="0.7" fill="#9aa4cc" opacity="0.28"/><circle cx="739.8" cy="517.3" r="1.2" fill="#9aa4cc" opacity="0.20"/><circle cx="588.6" cy="396.3" r="1.2" fill="#9aa4cc" opacity="0.30"/><circle cx="849.7" cy="411.3" r="1.0" fill="#9aa4cc" opacity="0.25"/><circle cx="436.0" cy="216.6" r="1.0" fill="#9aa4cc" opacity="0.27"/><circle cx="248.8" cy="281.7" r="0.8" fill="#9aa4cc" opacity="0.27"/><circle cx="256.3" cy="292.5" r="1.2" fill="#9aa4cc" opacity="0.21"/><circle cx="855.7" cy="336.5" r="0.8" fill="#9aa4cc" opacity="0.26"/><circle cx="891.1" cy="248.2" r="1.0" fill="#9aa4cc" opacity="0.10"/><circle cx="904.6" cy="145.4" r="0.8" fill="#9aa4cc" opacity="0.16"/><circle cx="168.4" cy="458.8" r="1.2" fill="#9aa4cc" opacity="0.33"/><circle cx="353.0" cy="489.1" r="0.8" fill="#9aa4cc" opacity="0.21"/><circle cx="716.5" cy="333.7" r="0.9" fill="#9aa4cc" opacity="0.25"/><circle cx="523.9" cy="286.4" r="0.8" fill="#9aa4cc" opacity="0.33"/><circle cx="985.4" cy="181.3" r="0.7" fill="#9aa4cc" opacity="0.22"/><circle cx="728.2" cy="380.9" r="0.9" fill="#9aa4cc" opacity="0.25"/><circle cx="280.2" cy="281.5" r="1.0" fill="#9aa4cc" opacity="0.10"/><circle cx="911.7" cy="387.7" r="1.2" fill="#9aa4cc" opacity="0.26"/><circle cx="271.2" cy="200.1" r="1.2" fill="#9aa4cc" opacity="0.28"/><circle cx="966.9" cy="557.3" r="1.0" fill="#9aa4cc" opacity="0.33"/><circle cx="218.8" cy="156.0" r="0.8" fill="#9aa4cc" opacity="0.29"/><circle cx="472.1" cy="356.8" r="0.8" fill="#9aa4cc" opacity="0.15"/><circle cx="357.8" cy="392.4" r="1.0" fill="#9aa4cc" opacity="0.30"/><circle cx="471.1" cy="232.6" r="0.8" fill="#9aa4cc" opacity="0.23"/><circle cx="778.1" cy="313.8" r="0.8" fill="#9aa4cc" opacity="0.29"/><circle cx="273.4" cy="270.5" r="1.0" fill="#9aa4cc" opacity="0.16"/><circle cx="678.6" cy="319.4" r="0.9" fill="#9aa4cc" opacity="0.29"/><circle cx="362.6" cy="399.6" r="1.0" fill="#9aa4cc" opacity="0.18"/><circle cx="432.1" cy="391.7" r="0.9" fill="#9aa4cc" opacity="0.26"/><circle cx="160.5" cy="236.7" r="0.7" fill="#9aa4cc" opacity="0.19"/><circle cx="825.5" cy="516.3" r="0.8" fill="#9aa4cc" opacity="0.29"/><circle cx="532.7" cy="256.1" r="0.7" fill="#9aa4cc" opacity="0.24"/><circle cx="216.6" cy="129.4" r="1.2" fill="#9aa4cc" opacity="0.17"/><circle cx="110.0" cy="162.2" r="1.0" fill="#9aa4cc" opacity="0.16"/><circle cx="351.2" cy="166.8" r="1.2" fill="#9aa4cc" opacity="0.32"/><circle cx="175.4" cy="509.5" r="0.7" fill="#9aa4cc" opacity="0.25"/><circle cx="668.4" cy="510.8" r="0.9" fill="#9aa4cc" opacity="0.29"/><circle cx="204.4" cy="417.5" r="1.0" fill="#9aa4cc" opacity="0.23"/><circle cx="671.2" cy="150.3" r="1.0" fill="#9aa4cc" opacity="0.13"/><circle cx="240.7" cy="160.7" r="0.7" fill="#9aa4cc" opacity="0.22"/><circle cx="487.1" cy="516.1" r="0.8" fill="#9aa4cc" opacity="0.27"/><circle cx="500.7" cy="346.3" r="0.7" fill="#9aa4cc" opacity="0.31"/><circle cx="168.0" cy="244.8" r="1.0" fill="#9aa4cc" opacity="0.27"/><circle cx="665.3" cy="486.0" r="1.0" fill="#9aa4cc" opacity="0.19"/><circle cx="995.0" cy="409.6" r="0.9" fill="#9aa4cc" opacity="0.14"/><circle cx="636.6" cy="109.2" r="0.9" fill="#9aa4cc" opacity="0.25"/><circle cx="806.5" cy="139.6" r="0.8" fill="#9aa4cc" opacity="0.22"/><circle cx="43.4" cy="429.2" r="0.9" fill="#9aa4cc" opacity="0.25"/><circle cx="103.0" cy="401.8" r="1.2" fill="#9aa4cc" opacity="0.18"/><circle cx="555.8" cy="519.3" r="0.9" fill="#9aa4cc" opacity="0.17"/><circle cx="426.1" cy="353.1" r="0.9" fill="#9aa4cc" opacity="0.30"/><circle cx="359.9" cy="325.1" r="0.9" fill="#9aa4cc" opacity="0.18"/><circle cx="869.9" cy="256.0" r="1.0" fill="#9aa4cc" opacity="0.15"/><circle cx="790.1" cy="249.5" r="0.9" fill="#9aa4cc" opacity="0.18"/><circle cx="135.7" cy="547.4" r="0.7" fill="#9aa4cc" opacity="0.12"/><circle cx="402.9" cy="353.2" r="1.2" fill="#9aa4cc" opacity="0.20"/><circle cx="59.0" cy="235.4" r="0.8" fill="#9aa4cc" opacity="0.10"/><circle cx="819.6" cy="316.4" r="0.7" fill="#9aa4cc" opacity="0.28"/><circle cx="787.2" cy="518.2" r="1.2" fill="#9aa4cc" opacity="0.25"/><circle cx="154.8" cy="408.6" r="0.7" fill="#9aa4cc" opacity="0.27"/><circle cx="219.3" cy="405.5" r="0.8" fill="#9aa4cc" opacity="0.21"/><circle cx="109.8" cy="180.1" r="0.7" fill="#9aa4cc" opacity="0.11"/><circle cx="910.4" cy="400.3" r="0.8" fill="#9aa4cc" opacity="0.19"/><circle cx="784.7" cy="356.8" r="0.9" fill="#9aa4cc" opacity="0.16"/><circle cx="192.0" cy="111.9" r="1.2" fill="#9aa4cc" opacity="0.10"/><circle cx="642.1" cy="529.3" r="1.2" fill="#9aa4cc" opacity="0.11"/><circle cx="524.3" cy="478.7" r="1.0" fill="#9aa4cc" opacity="0.29"/></g>
<defs><linearGradient id="wing" x1="0" y1="0" x2="0" y2="1"><stop offset="0" stop-color="#d6e0e3"/><stop offset=".35" stop-color="#b4c2c9"/><stop offset="1" stop-color="#8e9ea8"/></linearGradient></defs>
<rect x="102.2" y="310" width="1.2" height="40" fill="#141a2c"/>
<rect x="99.5" y="346" width="7" height="7" fill="#141a2c"/>
<rect x="89.5" y="352" width="27.5" height="15" fill="#0d1018"/>
<rect x="91.4" y="353.8" width="3.7" height="3.3" fill="#d4d6da"/>
<rect x="96.4" y="353.8" width="3.7" height="3.3" fill="#d4d6da"/>
<rect x="101.4" y="353.8" width="3.7" height="3.3" fill="#d4d6da"/>
<rect x="106.4" y="353.8" width="3.7" height="3.3" fill="#d4d6da"/>
<rect x="111.4" y="353.8" width="3.7" height="3.3" fill="#d4d6da"/>
<rect x="91.4" y="358.1" width="3.7" height="3.3" fill="#d4d6da"/>
<rect x="96.4" y="358.1" width="3.7" height="3.3" fill="#d4d6da"/>
<rect x="101.4" y="358.1" width="3.7" height="3.3" fill="#d4d6da"/>
<rect x="106.4" y="358.1" width="3.7" height="3.3" fill="#d4d6da"/>
<rect x="111.4" y="358.1" width="3.7" height="3.3" fill="#d4d6da"/>
<rect x="91.4" y="362.4" width="3.7" height="3.3" fill="#d4d6da"/>
<rect x="96.4" y="362.4" width="3.7" height="3.3" fill="#d4d6da"/>
<rect x="101.4" y="362.4" width="3.7" height="3.3" fill="#d4d6da"/>
<rect x="106.4" y="362.4" width="3.7" height="3.3" fill="#d4d6da"/>
<rect x="111.4" y="362.4" width="3.7" height="3.3" fill="#d4d6da"/>
<rect x="94" y="367" width="19" height="28" fill="#161c30"/>
<rect x="96" y="395" width="14" height="100" fill="#121829"/>
<circle cx="102.8" cy="309.5" r="0.9" fill="#d83048"/>
<circle cx="102.8" cy="309.5" r="1.98" fill="#d83048" opacity=".25"/>
<circle cx="97" cy="398.3" r="0.8" fill="#d83048"/>
<circle cx="97" cy="398.3" r="1.76" fill="#d83048" opacity=".25"/>
<circle cx="103" cy="398.3" r="0.8" fill="#d83048"/>
<circle cx="103" cy="398.3" r="1.76" fill="#d83048" opacity=".25"/>
<circle cx="109" cy="398.3" r="0.8" fill="#d83048"/>
<circle cx="109" cy="398.3" r="1.76" fill="#d83048" opacity=".25"/>
<circle cx="97" cy="433.8" r="0.8" fill="#d83048"/>
<circle cx="97" cy="433.8" r="1.76" fill="#d83048" opacity=".25"/>
<circle cx="103" cy="433.8" r="0.8" fill="#d83048"/>
<circle cx="103" cy="433.8" r="1.76" fill="#d83048" opacity=".25"/>
<circle cx="109" cy="433.8" r="0.8" fill="#d83048"/>
<circle cx="109" cy="433.8" r="1.76" fill="#d83048" opacity=".25"/>
<circle cx="97" cy="475" r="0.8" fill="#d83048"/>
<circle cx="97" cy="475" r="1.76" fill="#d83048" opacity=".25"/>
<circle cx="103" cy="475" r="0.8" fill="#d83048"/>
<circle cx="103" cy="475" r="1.76" fill="#d83048" opacity=".25"/>
<circle cx="109" cy="475" r="0.8" fill="#d83048"/>
<circle cx="109" cy="475" r="1.76" fill="#d83048" opacity=".25"/>
<rect x="21" y="435" width="63" height="180" fill="#121a2d"/>
<rect x="44" y="430" width="27" height="8" fill="#121a2d"/>
<rect x="47" y="427" width="20" height="4" fill="#121a2d"/>
<rect x="51.5" y="415" width="1" height="14" fill="#10141f"/>
<rect x="57" y="407" width="1" height="22" fill="#10141f"/>
<circle cx="52" cy="414.5" r="1" fill="#d83048"/>
<circle cx="52" cy="414.5" r="2.2" fill="#d83048" opacity=".25"/>
<circle cx="57.5" cy="407" r="1" fill="#d83048"/>
<circle cx="57.5" cy="407" r="2.2" fill="#d83048" opacity=".25"/>
<rect x="21" y="435" width="23" height="180" fill="#10172a"/>
<rect x="70" y="436" width="14" height="180" fill="#121727"/>
<rect x="8" y="486" width="13" height="130" fill="#141b2e"/>
<rect x="84" y="473" width="36" height="140" fill="#131a2b"/>
<rect x="100" y="492" width="20" height="120" fill="#131a2d"/>
<rect x="226" y="454.5" width="68.5" height="160" fill="#131b2f"/>
<rect x="226" y="454.5" width="68.5" height="1" fill="#1a2236"/>
<rect x="263.6" y="456.4" width="8.6" height="7.2" fill="#1d9be2"/>
<text x="264.300" y="462.400" font-family="Liberation Sans,sans-serif" font-size="5.8" font-weight="bold" fill="#e8f6ff" textLength="7.2" lengthAdjust="spacingAndGlyphs">Yo</text>
<text x="272.800" y="462.400" font-family="Liberation Sans,sans-serif" font-size="5.8" fill="#2aa2e6" textLength="20" lengthAdjust="spacingAndGlyphs">Window</text>
<rect x="213" y="519" width="100" height="95" fill="#151d34"/>
<defs><linearGradient id="bF" x1="0" x2="1" y1="0" y2="0"><stop offset="0" stop-color="#0e1626"/><stop offset=".25" stop-color="#111a2e"/><stop offset="1" stop-color="#111b30"/></linearGradient></defs>
<rect x="519.4" y="498" width="77.6" height="116" fill="url(#bF)"/>
<rect x="521" y="497" width="74" height="1.2" fill="#0f1728"/>
<rect x="525" y="501" width="2.6" height="112" fill="#131e38" opacity=".8"/>
<rect x="532.2" y="501" width="2.6" height="112" fill="#131e38" opacity=".8"/>
<rect x="539.4" y="501" width="2.6" height="112" fill="#131e38" opacity=".8"/>
<rect x="546.6" y="501" width="2.6" height="112" fill="#131e38" opacity=".8"/>
<rect x="553.8" y="501" width="2.6" height="112" fill="#131e38" opacity=".8"/>
<rect x="561" y="501" width="2.6" height="112" fill="#131e38" opacity=".8"/>
<rect x="568.2" y="501" width="2.6" height="112" fill="#131e38" opacity=".8"/>
<rect x="575.4" y="501" width="2.6" height="112" fill="#131e38" opacity=".8"/>
<rect x="582.6" y="501" width="2.6" height="112" fill="#131e38" opacity=".8"/>
<rect x="589.8" y="501" width="2.6" height="112" fill="#131e38" opacity=".8"/>
<rect x="483" y="552" width="37" height="60" fill="#111a2d"/>
<rect x="506" y="548" width="14" height="6" fill="#111a2d"/>
<rect x="597" y="548" width="9" height="70" fill="#111a2d"/>
<rect x="605" y="542" width="24" height="70" fill="#111a2d"/>
<rect x="628" y="487" width="39.6" height="126" fill="#0f1628"/>
<rect x="667" y="565.5" width="55" height="50" fill="#101829"/>
<path d="M490.700 505 L491.500 505 L492.300 530 L494.600 553 L487.600 553 L489.900 530 Z" fill="#182039"/>
<circle cx="491.1" cy="510" r="0.9" fill="#d83048"/>
<circle cx="491.1" cy="510" r="1.98" fill="#d83048" opacity=".25"/>
<path d="M700 614 V566 H712 V570 H718 V565 H728 V570 H734.3 V555.800 H776 V563 H795.500 V548.400 H836 V545 H842 V548.400 H863.600 V568 H870.700 V550 H901 V546 H907 V569 H915 V566 H925 V569 H935 V562.700 H952 V548 H958 V539.400 H972 V548 H978 V558 H997 V614 Z" fill="#0f1827"/>
<path d="M119 614 V466.400 H136.500 V457 H139.500 V444 H141.500 V441 H143.500 V440 H158 V441 H160.500 V444 H167 V461 H182 V465 H190 V479 H213 V491 H216 V614 Z" fill="#131525"/>
<rect x="146.6" y="428" width="0.9" height="13" fill="#0e1018"/>
<circle cx="147" cy="426.6" r="1" fill="#d83048"/>
<circle cx="147" cy="426.6" r="2.2" fill="#d83048" opacity=".25"/>
<rect x="121" y="470" width="7" height="2.4" fill="#1a2036"/>
<rect x="121" y="474.6" width="7" height="2.4" fill="#1a2036"/>
<rect x="121" y="479.2" width="7" height="2.4" fill="#1a2036"/>
<rect x="121" y="483.8" width="7" height="2.4" fill="#1a2036"/>
<rect x="121" y="488.4" width="7" height="2.4" fill="#1a2036"/>
<rect x="121" y="493" width="7" height="2.4" fill="#1a2036"/>
<rect x="121" y="497.6" width="7" height="2.4" fill="#1a2036"/>
<rect x="121" y="502.2" width="7" height="2.4" fill="#1a2036"/>
<rect x="121" y="506.8" width="7" height="2.4" fill="#1a2036"/>
<rect x="121" y="511.4" width="7" height="2.4" fill="#1a2036"/>
<rect x="121" y="516" width="7" height="2.4" fill="#1a2036"/>
<rect x="121" y="520.6" width="7" height="2.4" fill="#1a2036"/>
<rect x="121" y="525.2" width="7" height="2.4" fill="#1a2036"/>
<rect x="121" y="529.8" width="7" height="2.4" fill="#1a2036"/>
<rect x="121" y="534.4" width="7" height="2.4" fill="#1a2036"/>
<rect x="121" y="539" width="7" height="2.4" fill="#1a2036"/>
<rect x="121" y="543.6" width="7" height="2.4" fill="#1a2036"/>
<rect x="121" y="548.2" width="7" height="2.4" fill="#1a2036"/>
<rect x="121" y="552.8" width="7" height="2.4" fill="#1a2036"/>
<rect x="121" y="557.4" width="7" height="2.4" fill="#1a2036"/>
<rect x="121" y="562" width="7" height="2.4" fill="#1a2036"/>
<rect x="121" y="566.6" width="7" height="2.4" fill="#1a2036"/>
<rect x="121" y="571.2" width="7" height="2.4" fill="#1a2036"/>
<rect x="121" y="575.8" width="7" height="2.4" fill="#1a2036"/>
<rect x="121" y="580.4" width="7" height="2.4" fill="#1a2036"/>
<rect x="121" y="585" width="7" height="2.4" fill="#1a2036"/>
<rect x="121" y="589.6" width="7" height="2.4" fill="#1a2036"/>
<rect x="135" y="470" width="7" height="2.4" fill="#1a2036"/>
<rect x="135" y="474.6" width="7" height="2.4" fill="#1a2036"/>
<rect x="135" y="479.2" width="7" height="2.4" fill="#1a2036"/>
<rect x="135" y="483.8" width="7" height="2.4" fill="#1a2036"/>
<rect x="135" y="488.4" width="7" height="2.4" fill="#1a2036"/>
<rect x="135" y="493" width="7" height="2.4" fill="#1a2036"/>
<rect x="135" y="497.6" width="7" height="2.4" fill="#1a2036"/>
<rect x="135" y="502.2" width="7" height="2.4" fill="#1a2036"/>
<rect x="135" y="506.8" width="7" height="2.4" fill="#1a2036"/>
<rect x="135" y="511.4" width="7" height="2.4" fill="#1a2036"/>
<rect x="135" y="516" width="7" height="2.4" fill="#1a2036"/>
<rect x="135" y="520.6" width="7" height="2.4" fill="#1a2036"/>
<rect x="135" y="525.2" width="7" height="2.4" fill="#1a2036"/>
<rect x="135" y="529.8" width="7" height="2.4" fill="#1a2036"/>
<rect x="135" y="534.4" width="7" height="2.4" fill="#1a2036"/>
<rect x="135" y="539" width="7" height="2.4" fill="#1a2036"/>
<rect x="135" y="543.6" width="7" height="2.4" fill="#1a2036"/>
<rect x="135" y="548.2" width="7" height="2.4" fill="#1a2036"/>
<rect x="135" y="552.8" width="7" height="2.4" fill="#1a2036"/>
<rect x="135" y="557.4" width="7" height="2.4" fill="#1a2036"/>
<rect x="135" y="562" width="7" height="2.4" fill="#1a2036"/>
<rect x="135" y="566.6" width="7" height="2.4" fill="#1a2036"/>
<rect x="135" y="571.2" width="7" height="2.4" fill="#1a2036"/>
<rect x="135" y="575.8" width="7" height="2.4" fill="#1a2036"/>
<rect x="135" y="580.4" width="7" height="2.4" fill="#1a2036"/>
<rect x="135" y="585" width="7" height="2.4" fill="#1a2036"/>
<rect x="135" y="589.6" width="7" height="2.4" fill="#1a2036"/>
<rect x="152" y="449" width="14" height="2.4" fill="#1a2036"/>
<rect x="152" y="453.6" width="14" height="2.4" fill="#1a2036"/>
<rect x="152" y="458.2" width="14" height="2.4" fill="#1a2036"/>
<rect x="152" y="462.8" width="14" height="2.4" fill="#1a2036"/>
<rect x="152" y="467.4" width="14" height="2.4" fill="#1a2036"/>
<rect x="152" y="472" width="14" height="2.4" fill="#1a2036"/>
<rect x="152" y="476.6" width="14" height="2.4" fill="#1a2036"/>
<rect x="152" y="481.2" width="14" height="2.4" fill="#1a2036"/>
<rect x="152" y="485.8" width="14" height="2.4" fill="#1a2036"/>
<rect x="152" y="490.4" width="14" height="2.4" fill="#1a2036"/>
<rect x="152" y="495" width="14" height="2.4" fill="#1a2036"/>
<rect x="152" y="499.6" width="14" height="2.4" fill="#1a2036"/>
<rect x="152" y="504.2" width="14" height="2.4" fill="#1a2036"/>
<rect x="152" y="508.8" width="14" height="2.4" fill="#1a2036"/>
<rect x="152" y="513.4" width="14" height="2.4" fill="#1a2036"/>
<rect x="152" y="518" width="14" height="2.4" fill="#1a2036"/>
<rect x="152" y="522.6" width="14" height="2.4" fill="#1a2036"/>
<rect x="152" y="527.2" width="14" height="2.4" fill="#1a2036"/>
<rect x="152" y="531.8" width="14" height="2.4" fill="#1a2036"/>
<rect x="152" y="536.4" width="14" height="2.4" fill="#1a2036"/>
<rect x="152" y="541" width="14" height="2.4" fill="#1a2036"/>
<rect x="152" y="545.6" width="14" height="2.4" fill="#1a2036"/>
<rect x="152" y="550.2" width="14" height="2.4" fill="#1a2036"/>
<rect x="152" y="554.8" width="14" height="2.4" fill="#1a2036"/>
<rect x="152" y="559.4" width="14" height="2.4" fill="#1a2036"/>
<rect x="152" y="564" width="14" height="2.4" fill="#1a2036"/>
<rect x="152" y="568.6" width="14" height="2.4" fill="#1a2036"/>
<rect x="152" y="573.2" width="14" height="2.4" fill="#1a2036"/>
<rect x="152" y="577.8" width="14" height="2.4" fill="#1a2036"/>
<rect x="152" y="582.4" width="14" height="2.4" fill="#1a2036"/>
<rect x="152" y="587" width="14" height="2.4" fill="#1a2036"/>
<rect x="176" y="467" width="13" height="2.4" fill="#1a2036"/>
<rect x="176" y="471.6" width="13" height="2.4" fill="#1a2036"/>
<rect x="176" y="476.2" width="13" height="2.4" fill="#1a2036"/>
<rect x="176" y="480.8" width="13" height="2.4" fill="#1a2036"/>
<rect x="176" y="485.4" width="13" height="2.4" fill="#1a2036"/>
<rect x="176" y="490" width="13" height="2.4" fill="#1a2036"/>
<rect x="176" y="494.6" width="13" height="2.4" fill="#1a2036"/>
<rect x="176" y="499.2" width="13" height="2.4" fill="#1a2036"/>
<rect x="176" y="503.8" width="13" height="2.4" fill="#1a2036"/>
<rect x="176" y="508.4" width="13" height="2.4" fill="#1a2036"/>
<rect x="176" y="513" width="13" height="2.4" fill="#1a2036"/>
<rect x="176" y="517.6" width="13" height="2.4" fill="#1a2036"/>
<rect x="176" y="522.2" width="13" height="2.4" fill="#1a2036"/>
<rect x="176" y="526.8" width="13" height="2.4" fill="#1a2036"/>
<rect x="176" y="531.4" width="13" height="2.4" fill="#1a2036"/>
<rect x="176" y="536" width="13" height="2.4" fill="#1a2036"/>
<rect x="176" y="540.6" width="13" height="2.4" fill="#1a2036"/>
<rect x="176" y="545.2" width="13" height="2.4" fill="#1a2036"/>
<rect x="176" y="549.8" width="13" height="2.4" fill="#1a2036"/>
<rect x="176" y="554.4" width="13" height="2.4" fill="#1a2036"/>
<rect x="176" y="559" width="13" height="2.4" fill="#1a2036"/>
<rect x="176" y="563.6" width="13" height="2.4" fill="#1a2036"/>
<rect x="176" y="568.2" width="13" height="2.4" fill="#1a2036"/>
<rect x="176" y="572.8" width="13" height="2.4" fill="#1a2036"/>
<rect x="176" y="577.4" width="13" height="2.4" fill="#1a2036"/>
<rect x="176" y="582" width="13" height="2.4" fill="#1a2036"/>
<rect x="176" y="586.6" width="13" height="2.4" fill="#1a2036"/>
<rect x="197" y="483" width="15" height="2.4" fill="#1a2036"/>
<rect x="197" y="487.6" width="15" height="2.4" fill="#1a2036"/>
<rect x="197" y="492.2" width="15" height="2.4" fill="#1a2036"/>
<rect x="197" y="496.8" width="15" height="2.4" fill="#1a2036"/>
<rect x="197" y="501.4" width="15" height="2.4" fill="#1a2036"/>
<rect x="197" y="506" width="15" height="2.4" fill="#1a2036"/>
<rect x="197" y="510.6" width="15" height="2.4" fill="#1a2036"/>
<rect x="197" y="515.2" width="15" height="2.4" fill="#1a2036"/>
<rect x="197" y="519.8" width="15" height="2.4" fill="#1a2036"/>
<rect x="197" y="524.4" width="15" height="2.4" fill="#1a2036"/>
<rect x="197" y="529" width="15" height="2.4" fill="#1a2036"/>
<rect x="197" y="533.6" width="15" height="2.4" fill="#1a2036"/>
<rect x="197" y="538.2" width="15" height="2.4" fill="#1a2036"/>
<rect x="197" y="542.8" width="15" height="2.4" fill="#1a2036"/>
<rect x="197" y="547.4" width="15" height="2.4" fill="#1a2036"/>
<rect x="197" y="552" width="15" height="2.4" fill="#1a2036"/>
<rect x="197" y="556.6" width="15" height="2.4" fill="#1a2036"/>
<rect x="197" y="561.2" width="15" height="2.4" fill="#1a2036"/>
<rect x="197" y="565.8" width="15" height="2.4" fill="#1a2036"/>
<rect x="197" y="570.4" width="15" height="2.4" fill="#1a2036"/>
<rect x="197" y="575" width="15" height="2.4" fill="#1a2036"/>
<rect x="197" y="579.6" width="15" height="2.4" fill="#1a2036"/>
<rect x="197" y="584.2" width="15" height="2.4" fill="#1a2036"/>
<rect x="197" y="588.8" width="15" height="2.4" fill="#1a2036"/>
<rect x="327" y="475.4" width="78.6" height="140" fill="#141d36"/>
<rect x="327" y="475.4" width="28" height="140" fill="#151a2c"/>
<rect x="352.6" y="464" width="27.4" height="12" fill="#141828"/>
<rect x="344" y="470" width="54" height="1" fill="#10151f"/>
<rect x="344" y="470" width="1.2" height="6" fill="#10151f"/>
<rect x="349" y="470" width="1.2" height="6" fill="#10151f"/>
<rect x="385" y="470" width="1.2" height="6" fill="#10151f"/>
<rect x="391" y="470" width="1.2" height="6" fill="#10151f"/>
<rect x="397" y="470" width="1.2" height="6" fill="#10151f"/>
<rect x="359" y="453" width="0.9" height="12" fill="#10151f"/>
<circle cx="359.4" cy="451.6" r="1" fill="#d83048"/>
<circle cx="359.4" cy="451.6" r="2.2" fill="#d83048" opacity=".25"/>
<circle cx="368" cy="461.500" r="2" fill="#10151f"/><circle cx="372" cy="460" r="1.800" fill="#10151f"/>
<rect x="329" y="480" width="75" height="1" fill="#0e1320" opacity=".7"/>
<rect x="329" y="484.2" width="75" height="1" fill="#0e1320" opacity=".7"/>
<rect x="329" y="488.4" width="75" height="1" fill="#0e1320" opacity=".7"/>
<rect x="329" y="492.6" width="75" height="1" fill="#0e1320" opacity=".7"/>
<rect x="329" y="496.8" width="75" height="1" fill="#0e1320" opacity=".7"/>
<rect x="329" y="501" width="75" height="1" fill="#0e1320" opacity=".7"/>
<rect x="329" y="505.2" width="75" height="1" fill="#0e1320" opacity=".7"/>
<rect x="329" y="509.4" width="75" height="1" fill="#0e1320" opacity=".7"/>
<rect x="329" y="513.6" width="75" height="1" fill="#0e1320" opacity=".7"/>
<rect x="329" y="517.8" width="75" height="1" fill="#0e1320" opacity=".7"/>
<rect x="329" y="522" width="75" height="1" fill="#0e1320" opacity=".7"/>
<rect x="329" y="526.2" width="75" height="1" fill="#0e1320" opacity=".7"/>
<rect x="329" y="530.4" width="75" height="1" fill="#0e1320" opacity=".7"/>
<rect x="329" y="534.6" width="75" height="1" fill="#0e1320" opacity=".7"/>
<rect x="329" y="538.8" width="75" height="1" fill="#0e1320" opacity=".7"/>
<rect x="329" y="543" width="75" height="1" fill="#0e1320" opacity=".7"/>
<rect x="329" y="547.2" width="75" height="1" fill="#0e1320" opacity=".7"/>
<rect x="329" y="551.4" width="75" height="1" fill="#0e1320" opacity=".7"/>
<rect x="329" y="555.6" width="75" height="1" fill="#0e1320" opacity=".7"/>
<rect x="329" y="559.8" width="75" height="1" fill="#0e1320" opacity=".7"/>
<rect x="329" y="564" width="75" height="1" fill="#0e1320" opacity=".7"/>
<rect x="329" y="568.2" width="75" height="1" fill="#0e1320" opacity=".7"/>
<rect x="329" y="572.4" width="75" height="1" fill="#0e1320" opacity=".7"/>
<rect x="329" y="576.6" width="75" height="1" fill="#0e1320" opacity=".7"/>
<rect x="329" y="580.8" width="75" height="1" fill="#0e1320" opacity=".7"/>
<rect x="329" y="585" width="75" height="1" fill="#0e1320" opacity=".7"/>
<rect x="329" y="589.2" width="75" height="1" fill="#0e1320" opacity=".7"/>
<rect x="331" y="478" width="0.8" height="112" fill="#0e1320" opacity=".55"/>
<rect x="335.1" y="478" width="0.8" height="112" fill="#0e1320" opacity=".55"/>
<rect x="339.2" y="478" width="0.8" height="112" fill="#0e1320" opacity=".55"/>
<rect x="343.3" y="478" width="0.8" height="112" fill="#0e1320" opacity=".55"/>
<rect x="347.4" y="478" width="0.8" height="112" fill="#0e1320" opacity=".55"/>
<rect x="351.5" y="478" width="0.8" height="112" fill="#0e1320" opacity=".55"/>
<rect x="355.6" y="478" width="0.8" height="112" fill="#0e1320" opacity=".55"/>
<rect x="359.7" y="478" width="0.8" height="112" fill="#0e1320" opacity=".55"/>
<rect x="363.8" y="478" width="0.8" height="112" fill="#0e1320" opacity=".55"/>
<rect x="367.9" y="478" width="0.8" height="112" fill="#0e1320" opacity=".55"/>
<rect x="372" y="478" width="0.8" height="112" fill="#0e1320" opacity=".55"/>
<rect x="376.1" y="478" width="0.8" height="112" fill="#0e1320" opacity=".55"/>
<rect x="380.2" y="478" width="0.8" height="112" fill="#0e1320" opacity=".55"/>
<rect x="384.3" y="478" width="0.8" height="112" fill="#0e1320" opacity=".55"/>
<rect x="388.4" y="478" width="0.8" height="112" fill="#0e1320" opacity=".55"/>
<rect x="392.5" y="478" width="0.8" height="112" fill="#0e1320" opacity=".55"/>
<rect x="396.6" y="478" width="0.8" height="112" fill="#0e1320" opacity=".55"/>
<rect x="400.7" y="478" width="0.8" height="112" fill="#0e1320" opacity=".55"/>
<rect x="312.6" y="514" width="15" height="100" fill="#121a2d"/>
<rect x="300" y="519" width="13" height="95" fill="#131b2e"/>
<rect x="405" y="546" width="40" height="70" fill="#111a2c"/>
<rect x="369.7" y="519.3" width="74.5" height="95" fill="#111726"/>
<rect x="444" y="529" width="39.4" height="85" fill="#121828"/>
<rect x="388.6" y="532" width="2.2" height="3.4" fill="#7ccfe6"/>
<rect x="388.6" y="538.2" width="2.2" height="3.4" fill="#7ccfe6"/>
<rect x="388.6" y="544.4" width="2.2" height="3.4" fill="#7ccfe6"/>
<rect x="388.6" y="550.6" width="2.2" height="3.4" fill="#7ccfe6"/>
<rect x="388.6" y="556.8" width="2.2" height="3.4" fill="#7ccfe6"/>
<rect x="388.6" y="563" width="2.2" height="3.4" fill="#7ccfe6"/>
<rect x="388.6" y="575.4" width="2.2" height="3.4" fill="#7ccfe6"/>
<rect x="388.6" y="581.6" width="2.2" height="3.4" fill="#7ccfe6"/>
<rect x="416.7" y="532" width="2.2" height="3.4" fill="#7ccfe6"/>
<rect x="416.7" y="538.2" width="2.2" height="3.4" fill="#7ccfe6"/>
<rect x="416.7" y="544.4" width="2.2" height="3.4" fill="#7ccfe6"/>
<rect x="416.7" y="550.6" width="2.2" height="3.4" fill="#7ccfe6"/>
<rect x="416.7" y="556.8" width="2.2" height="3.4" fill="#7ccfe6"/>
<rect x="416.7" y="563" width="2.2" height="3.4" fill="#7ccfe6"/>
<rect x="416.7" y="569.2" width="2.2" height="3.4" fill="#7ccfe6"/>
<rect x="416.7" y="575.4" width="2.2" height="3.4" fill="#7ccfe6"/>
<rect x="416.7" y="581.6" width="2.2" height="3.4" fill="#7ccfe6"/>
<rect x="416.7" y="587.8" width="2.2" height="3.4" fill="#7ccfe6"/>
<rect x="475" y="532" width="2.2" height="3.4" fill="#7ccfe6"/>
<rect x="475" y="538.2" width="2.2" height="3.4" fill="#7ccfe6"/>
<rect x="475" y="544.4" width="2.2" height="3.4" fill="#7ccfe6"/>
<rect x="475" y="550.6" width="2.2" height="3.4" fill="#7ccfe6"/>
<rect x="475" y="556.8" width="2.2" height="3.4" fill="#7ccfe6"/>
<rect x="475" y="563" width="2.2" height="3.4" fill="#7ccfe6"/>
<rect x="475" y="569.2" width="2.2" height="3.4" fill="#7ccfe6"/>
<rect x="388.4" y="523" width="2.6" height="5.4" fill="#a4e2f2"/>
<rect x="416.5" y="523" width="2.6" height="5.4" fill="#a4e2f2"/>
<rect x="372.5" y="532.5" width="2.4" height="1.4" fill="#f4eee0" opacity="1"/>
<rect x="375.7" y="532.5" width="2.4" height="1.4" fill="#f4eee0" opacity="1"/>
<rect x="434.5" y="532.5" width="2.4" height="1.4" fill="#f4d8b0" opacity="1"/>
<rect x="437.7" y="532.5" width="2.4" height="1.4" fill="#f4d8b0" opacity="1"/>
<rect x="463.5" y="545.5" width="2.2" height="1.4" fill="#f0d0a0" opacity="1"/>
<rect x="466.5" y="545.5" width="2.2" height="1.4" fill="#f0d0a0" opacity="1"/>
<rect x="469" y="549.5" width="2.2" height="1.4" fill="#f0e0c0" opacity="1"/>
<rect x="456.5" y="581" width="3" height="1.4" fill="#ffffff" opacity="1"/>
<rect x="381" y="580.5" width="2" height="3.5" fill="#e04848"/>
<rect x="222" y="531.5" width="2.4" height="1.4" fill="#d8dce4" opacity="0.95"/>
<rect x="225.2" y="531.5" width="2.4" height="1.4" fill="#d8dce4" opacity="0.95"/>
<rect x="216.5" y="545.5" width="2.2" height="1.4" fill="#d8dce4" opacity="0.9"/>
<rect x="219.5" y="545.5" width="2.2" height="1.4" fill="#d8dce4" opacity="0.9"/>
<rect x="214" y="558.5" width="2.6" height="1.4" fill="#e4e8f0" opacity="0.95"/>
<rect x="217.4" y="558.5" width="2.6" height="1.4" fill="#e4e8f0" opacity="0.95"/>
<rect x="226.5" y="572" width="2.8" height="1.4" fill="#eef0f6" opacity="1"/>
<rect x="230.1" y="572" width="2.8" height="1.4" fill="#eef0f6" opacity="1"/>
<rect x="326" y="506" width="1.5" height="1.4" fill="#c0a080" opacity="0.6"/>
<rect x="296.5" y="546" width="2" height="1.4" fill="#9aa0b0" opacity="0.6"/>
<rect x="299.3" y="546" width="2" height="1.4" fill="#9aa0b0" opacity="0.6"/>
<rect x="302" y="570.8" width="2.4" height="1.4" fill="#d8dce4" opacity="0.95"/>
<rect x="305.2" y="570.8" width="2.4" height="1.4" fill="#d8dce4" opacity="0.95"/>
<rect x="655.5" y="497" width="2" height="1.4" fill="#a8a090" opacity="0.8"/>
<rect x="658.5" y="506" width="2" height="1.4" fill="#a8a090" opacity="0.8"/>
<rect x="661" y="535" width="2" height="1.4" fill="#a8a090" opacity="0.8"/>
<rect x="665.5" y="548" width="2" height="1.4" fill="#9098a0" opacity="0.8"/>
<rect x="665.5" y="555" width="2" height="1.4" fill="#9098a0" opacity="0.8"/>
<rect x="650.5" y="511" width="2.2" height="1.4" fill="#e07850" opacity="0.9"/>
<rect x="653.5" y="511" width="2.2" height="1.4" fill="#e07850" opacity="0.9"/>
<rect x="634" y="522" width="2.2" height="1.4" fill="#e8d0b0" opacity="0.9"/>
<rect x="637" y="522" width="2.2" height="1.4" fill="#e8d0b0" opacity="0.9"/>
<rect x="639.5" y="526.5" width="2.2" height="1.4" fill="#c8c8c8" opacity="0.9"/>
<rect x="642.5" y="526.5" width="2.2" height="1.4" fill="#c8c8c8" opacity="0.9"/>
<rect x="634" y="535" width="2.2" height="1.4" fill="#f0dcb0" opacity="0.9"/>
<rect x="637" y="535" width="2.2" height="1.4" fill="#f0dcb0" opacity="0.9"/>
<rect x="628.5" y="557.5" width="2.2" height="1.4" fill="#c8ccd4" opacity="0.9"/>
<rect x="631.5" y="557.5" width="2.2" height="1.4" fill="#c8ccd4" opacity="0.9"/>
<rect x="634.5" y="555.5" width="2.2" height="1.4" fill="#e0d8c8" opacity="0.9"/>
<rect x="637.5" y="555.5" width="2.2" height="1.4" fill="#e0d8c8" opacity="0.9"/>
<rect x="645.5" y="555.5" width="2.2" height="1.4" fill="#c0c4cc" opacity="0.9"/>
<rect x="648.5" y="555.5" width="2.2" height="1.4" fill="#c0c4cc" opacity="0.9"/>
<rect x="503.5" y="567" width="2.4" height="1.4" fill="#f0907a" opacity="0.92"/>
<rect x="506.7" y="567" width="2.4" height="1.4" fill="#f0907a" opacity="0.92"/>
<rect x="510.5" y="585" width="2.4" height="1.4" fill="#e8ecf0" opacity="0.92"/>
<rect x="513.7" y="585" width="2.4" height="1.4" fill="#e8ecf0" opacity="0.92"/>
<rect x="649" y="587" width="2.4" height="1.4" fill="#e8e0d0" opacity="0.92"/>
<rect x="652.2" y="587" width="2.4" height="1.4" fill="#e8e0d0" opacity="0.92"/>
<rect x="642.5" y="593" width="2.4" height="1.4" fill="#c8e0f0" opacity="0.92"/>
<rect x="645.7" y="593" width="2.4" height="1.4" fill="#c8e0f0" opacity="0.92"/>
<rect x="663" y="593" width="2.4" height="1.4" fill="#f0d070" opacity="0.92"/>
<rect x="666.2" y="593" width="2.4" height="1.4" fill="#f0d070" opacity="0.92"/>
<rect x="663" y="581" width="2.4" height="1.4" fill="#b0b4b8" opacity="0.92"/>
<rect x="666.2" y="581" width="2.4" height="1.4" fill="#b0b4b8" opacity="0.92"/>
<rect x="680" y="581" width="2.4" height="1.4" fill="#b0b4b8" opacity="0.92"/>
<rect x="683.2" y="581" width="2.4" height="1.4" fill="#b0b4b8" opacity="0.92"/>
<rect x="697" y="585" width="2.4" height="1.4" fill="#d8d8d8" opacity="0.92"/>
<rect x="700.2" y="585" width="2.4" height="1.4" fill="#d8d8d8" opacity="0.92"/>
<rect x="707" y="585" width="2.4" height="1.4" fill="#c0c0c0" opacity="0.92"/>
<rect x="710.2" y="585" width="2.4" height="1.4" fill="#c0c0c0" opacity="0.92"/>
<rect x="541" y="586" width="3" height="1.4" fill="#e8ecf0" opacity="0.9"/>
<rect x="755" y="561" width="2.1" height="1.4" fill="#bdbdbd" opacity="0.85"/>
<rect x="757.9" y="561" width="2.1" height="1.4" fill="#bdbdbd" opacity="0.85"/>
<rect x="766" y="561" width="2.1" height="1.4" fill="#bdbdbd" opacity="0.85"/>
<rect x="768.9" y="561" width="2.1" height="1.4" fill="#bdbdbd" opacity="0.85"/>
<rect x="807" y="559.5" width="2.1" height="1.4" fill="#bdbdbd" opacity="0.85"/>
<rect x="809.9" y="559.5" width="2.1" height="1.4" fill="#bdbdbd" opacity="0.85"/>
<rect x="818" y="564" width="2.1" height="1.4" fill="#bdbdbd" opacity="0.85"/>
<rect x="820.9" y="564" width="2.1" height="1.4" fill="#bdbdbd" opacity="0.85"/>
<rect x="845" y="553" width="2.1" height="1.4" fill="#bdbdbd" opacity="0.85"/>
<rect x="847.9" y="553" width="2.1" height="1.4" fill="#bdbdbd" opacity="0.85"/>
<rect x="851" y="559.5" width="2.1" height="1.4" fill="#bdbdbd" opacity="0.85"/>
<rect x="853.9" y="559.5" width="2.1" height="1.4" fill="#bdbdbd" opacity="0.85"/>
<rect x="851" y="564.5" width="2.1" height="1.4" fill="#bdbdbd" opacity="0.85"/>
<rect x="853.9" y="564.5" width="2.1" height="1.4" fill="#bdbdbd" opacity="0.85"/>
<rect x="872" y="558" width="2.1" height="1.4" fill="#bdbdbd" opacity="0.85"/>
<rect x="874.9" y="558" width="2.1" height="1.4" fill="#bdbdbd" opacity="0.85"/>
<rect x="744" y="581.5" width="2.1" height="1.4" fill="#bdbdbd" opacity="0.85"/>
<rect x="746.9" y="581.5" width="2.1" height="1.4" fill="#bdbdbd" opacity="0.85"/>
<rect x="784" y="581.5" width="2.1" height="1.4" fill="#bdbdbd" opacity="0.85"/>
<rect x="786.9" y="581.5" width="2.1" height="1.4" fill="#bdbdbd" opacity="0.85"/>
<rect x="777" y="588.5" width="2.1" height="1.4" fill="#bdbdbd" opacity="0.85"/>
<rect x="779.9" y="588.5" width="2.1" height="1.4" fill="#bdbdbd" opacity="0.85"/>
<rect x="823" y="579.5" width="2.1" height="1.4" fill="#bdbdbd" opacity="0.85"/>
<rect x="825.9" y="579.5" width="2.1" height="1.4" fill="#bdbdbd" opacity="0.85"/>
<rect x="834" y="579.5" width="2.1" height="1.4" fill="#bdbdbd" opacity="0.85"/>
<rect x="836.9" y="579.5" width="2.1" height="1.4" fill="#bdbdbd" opacity="0.85"/>
<rect x="872" y="586.5" width="2.1" height="1.4" fill="#bdbdbd" opacity="0.85"/>
<rect x="874.9" y="586.5" width="2.1" height="1.4" fill="#bdbdbd" opacity="0.85"/>
<rect x="901" y="573.5" width="2.1" height="1.4" fill="#bdbdbd" opacity="0.85"/>
<rect x="903.9" y="573.5" width="2.1" height="1.4" fill="#bdbdbd" opacity="0.85"/>
<rect x="924" y="578.5" width="2.1" height="1.4" fill="#bdbdbd" opacity="0.85"/>
<rect x="926.9" y="578.5" width="2.1" height="1.4" fill="#bdbdbd" opacity="0.85"/>
<rect x="918" y="584" width="2.1" height="1.4" fill="#bdbdbd" opacity="0.85"/>
<rect x="920.9" y="584" width="2.1" height="1.4" fill="#bdbdbd" opacity="0.85"/>
<rect x="918" y="594" width="2.1" height="1.4" fill="#bdbdbd" opacity="0.85"/>
<rect x="920.9" y="594" width="2.1" height="1.4" fill="#bdbdbd" opacity="0.85"/>
<rect x="918" y="605" width="2.1" height="1.4" fill="#bdbdbd" opacity="0.85"/>
<rect x="920.9" y="605" width="2.1" height="1.4" fill="#bdbdbd" opacity="0.85"/>
<rect x="878" y="605" width="2.1" height="1.4" fill="#bdbdbd" opacity="0.85"/>
<rect x="880.9" y="605" width="2.1" height="1.4" fill="#bdbdbd" opacity="0.85"/>
<rect x="959" y="594" width="2.1" height="1.4" fill="#bdbdbd" opacity="0.85"/>
<rect x="961.9" y="594" width="2.1" height="1.4" fill="#bdbdbd" opacity="0.85"/>
<rect x="965" y="562.5" width="2.1" height="1.4" fill="#bdbdbd" opacity="0.85"/>
<rect x="967.9" y="562.5" width="2.1" height="1.4" fill="#bdbdbd" opacity="0.85"/>
<rect x="965" y="573.5" width="2.1" height="1.4" fill="#bdbdbd" opacity="0.85"/>
<rect x="967.9" y="573.5" width="2.1" height="1.4" fill="#bdbdbd" opacity="0.85"/>
<rect x="702" y="585" width="2.1" height="1.4" fill="#bdbdbd" opacity="0.85"/>
<rect x="704.9" y="585" width="2.1" height="1.4" fill="#bdbdbd" opacity="0.85"/>
<rect x="727" y="590.5" width="2.1" height="1.4" fill="#bdbdbd" opacity="0.85"/>
<rect x="729.9" y="590.5" width="2.1" height="1.4" fill="#bdbdbd" opacity="0.85"/>
<rect x="716" y="598" width="2.1" height="1.4" fill="#bdbdbd" opacity="0.85"/>
<rect x="718.9" y="598" width="2.1" height="1.4" fill="#bdbdbd" opacity="0.85"/>
<rect x="841" y="606" width="2.1" height="1.4" fill="#bdbdbd" opacity="0.85"/>
<rect x="843.9" y="606" width="2.1" height="1.4" fill="#bdbdbd" opacity="0.85"/>
<rect x="852" y="608.5" width="2.1" height="1.4" fill="#bdbdbd" opacity="0.85"/>
<rect x="854.9" y="608.5" width="2.1" height="1.4" fill="#bdbdbd" opacity="0.85"/>
<rect x="858" y="609" width="2.1" height="1.4" fill="#bdbdbd" opacity="0.85"/>
<rect x="860.9" y="609" width="2.1" height="1.4" fill="#bdbdbd" opacity="0.85"/>
<rect x="896" y="605" width="2.1" height="1.4" fill="#bdbdbd" opacity="0.85"/>
<rect x="898.9" y="605" width="2.1" height="1.4" fill="#bdbdbd" opacity="0.85"/>
<rect x="727" y="598.5" width="2.6" height="1.4" fill="#ffffff" opacity="1"/>
<rect x="730.4" y="598.5" width="2.6" height="1.4" fill="#ffffff" opacity="1"/>
<rect x="994" y="570" width="2.5" height="1.4" fill="#e06060" opacity="0.8"/>
<rect x="736" y="580" width="2" height="1.4" fill="#c0a080" opacity="0.7"/>
<rect x="738.8" y="580" width="2" height="1.4" fill="#c0a080" opacity="0.7"/>
<rect x="733" y="586" width="2" height="1.4" fill="#c0a080" opacity="0.7"/>
<rect x="735.8" y="586" width="2" height="1.4" fill="#c0a080" opacity="0.7"/>
<path d="M8 616 V548 Q14 545.500 20 548 Q26 552 27.500 566 L29.500 569 Q32 556 40 552.500 Q47 550.500 54 556 Q61 563 63.500 578 L67 583 Q72 578 79 578.500 Q84 579 88 582 Q93 574.500 100 574.600 Q109 575.500 114 586 L120 594 V616 Z" fill="#0d1610"/>
<path d="M8 616 V572 q8 -6 16 2 q6 -8 18 -4 q10 6 12 16 q10 -4 20 0 q12 -6 24 0 q10 4 14 8 q5 2 8 2 V616 Z" fill="#0a120d" opacity=".8"/>
<rect x="80" y="605.5" width="32" height="5.5" fill="#161e1f"/>
<path d="M470 612 V600.500 q6 -4 14 -3 q8 -4 16 0 q10 -4 20 -1 q10 -4 18 0 q10 -4 22 -1 q14 -3 24 1 q12 -4 24 0 q14 -4 26 0 q12 -3 24 0 q14 -4 28 0 q12 -3 22 1 q10 -3 20 1 q20 -2 30 1 V612 Z" fill="#0c1512"/>
<path d="M469 612 V582 q5 -6 12 -5 q8 -2 13 4 q8 2 12 9 q8 3 14 9 q6 3 10 9 V612 Z" fill="#0b130f"/>
<rect x="700" y="603" width="297" height="10" fill="#0c1512"/>
<path d="M700 612 V594 q14 -2 24 5 q6 4 10 8 V612 Z" fill="#0b130f"/>
<path d="M559 579.500 L549.5 600.500 L568.5 600.500 Z" fill="url(#cone)"/>
<rect x="557.8" y="578.6" width="2.4" height="1.4" fill="#e8e8e4"/>
<path d="M622.5 579.500 L613 600.500 L632 600.500 Z" fill="url(#cone)"/>
<rect x="621.3" y="578.6" width="2.4" height="1.4" fill="#e8e8e4"/>
<path d="M687 579.500 L677.5 600.500 L696.5 600.500 Z" fill="url(#cone)"/>
<rect x="685.8" y="578.6" width="2.4" height="1.4" fill="#e8e8e4"/>
<path d="M750 579.500 L740.5 600.500 L759.5 600.500 Z" fill="url(#cone)"/>
<rect x="748.8" y="578.6" width="2.4" height="1.4" fill="#e8e8e4"/>
<path d="M815 579.500 L805.5 600.500 L824.5 600.500 Z" fill="url(#cone)"/>
<rect x="813.8" y="578.6" width="2.4" height="1.4" fill="#e8e8e4"/>
<path d="M885.5 579.500 L876 600.500 L895 600.500 Z" fill="url(#cone)"/>
<rect x="884.3" y="578.6" width="2.4" height="1.4" fill="#e8e8e4"/>
<path d="M946.5 579.500 L937 600.500 L956 600.500 Z" fill="url(#cone)"/>
<rect x="945.3" y="578.6" width="2.4" height="1.4" fill="#e8e8e4"/>
<circle cx="137" cy="549" r="8" fill="url(#lamp)"/>
<rect x="136.5" y="552" width="1" height="40" fill="#232a3c"/>
<rect x="133.7" y="546" width="2.3" height="2.3" fill="#d4d8e2"/>
<rect x="133.7" y="549.6" width="2.3" height="2.3" fill="#d4d8e2"/>
<rect x="137.9" y="546" width="2.3" height="2.3" fill="#d4d8e2"/>
<rect x="137.9" y="549.6" width="2.3" height="2.3" fill="#d4d8e2"/>
<circle cx="260" cy="549" r="8" fill="url(#lamp)"/>
<rect x="259.5" y="552" width="1" height="40" fill="#232a3c"/>
<rect x="256.7" y="546" width="2.3" height="2.3" fill="#d4d8e2"/>
<rect x="256.7" y="549.6" width="2.3" height="2.3" fill="#d4d8e2"/>
<rect x="260.9" y="546" width="2.3" height="2.3" fill="#d4d8e2"/>
<rect x="260.9" y="549.6" width="2.3" height="2.3" fill="#d4d8e2"/>
<circle cx="377" cy="549" r="8" fill="url(#lamp)"/>
<rect x="376.5" y="552" width="1" height="40" fill="#232a3c"/>
<rect x="373.7" y="546" width="2.3" height="2.3" fill="#d4d8e2"/>
<rect x="373.7" y="549.6" width="2.3" height="2.3" fill="#d4d8e2"/>
<rect x="377.9" y="546" width="2.3" height="2.3" fill="#d4d8e2"/>
<rect x="377.9" y="549.6" width="2.3" height="2.3" fill="#d4d8e2"/>
<circle cx="472" cy="549" r="8" fill="url(#lamp)"/>
<rect x="471.5" y="552" width="1" height="40" fill="#232a3c"/>
<rect x="468.7" y="546" width="2.3" height="2.3" fill="#d4d8e2"/>
<rect x="468.7" y="549.6" width="2.3" height="2.3" fill="#d4d8e2"/>
<rect x="472.9" y="546" width="2.3" height="2.3" fill="#d4d8e2"/>
<rect x="472.9" y="549.6" width="2.3" height="2.3" fill="#d4d8e2"/>
<circle cx="549.5" cy="549" r="13" fill="url(#lamp)"/>
<rect x="549" y="552" width="1" height="40" fill="#232a3c"/>
<rect x="546.2" y="546" width="2.3" height="2.3" fill="#d4d8e2"/>
<rect x="546.2" y="549.6" width="2.3" height="2.3" fill="#d4d8e2"/>
<rect x="550.4" y="546" width="2.3" height="2.3" fill="#d4d8e2"/>
<rect x="550.4" y="549.6" width="2.3" height="2.3" fill="#d4d8e2"/>
<rect x="203" y="573" width="18.5" height="18" fill="#1a1f27"/>
<rect x="209" y="567" width="4" height="7" fill="#1a1f27"/>
<rect x="121" y="590" width="349" height="22" fill="#161c27"/>
<rect x="121" y="590" width="349" height="2.5" fill="#232a36"/>
<rect x="121" y="593" width="349" height="4" fill="#1b222e"/>
<defs><linearGradient id="dome" x1="0" y1="0" x2="0" y2="1"><stop offset="0" stop-color="#c6d8c8"/><stop offset=".45" stop-color="#dfe8c0"/><stop offset="1" stop-color="#8fb8d0"/></linearGradient></defs>
<path d="M258 592 Q296 570 326 570.500 Q358 571 386 592 Z" fill="#141926"/>
<path d="M277 592 Q304 575 326 575 Q350 575 376 592 Z" fill="url(#dome)"/>
<clipPath id="domeclip"><path d="M277 592 Q304 575 326 575 Q350 575 376 592 Z"/></clipPath><g clip-path="url(#domeclip)">
<rect x="281" y="574" width="0.8" height="18" fill="#4a5b68" opacity=".55"/>
<rect x="285.6" y="574" width="0.8" height="18" fill="#4a5b68" opacity=".55"/>
<rect x="290.2" y="574" width="0.8" height="18" fill="#4a5b68" opacity=".55"/>
<rect x="294.8" y="574" width="0.8" height="18" fill="#4a5b68" opacity=".55"/>
<rect x="299.4" y="574" width="0.8" height="18" fill="#4a5b68" opacity=".55"/>
<rect x="304" y="574" width="0.8" height="18" fill="#4a5b68" opacity=".55"/>
<rect x="308.6" y="574" width="0.8" height="18" fill="#4a5b68" opacity=".55"/>
<rect x="313.2" y="574" width="0.8" height="18" fill="#4a5b68" opacity=".55"/>
<rect x="317.8" y="574" width="0.8" height="18" fill="#4a5b68" opacity=".55"/>
<rect x="322.4" y="574" width="0.8" height="18" fill="#4a5b68" opacity=".55"/>
<rect x="327" y="574" width="0.8" height="18" fill="#4a5b68" opacity=".55"/>
<rect x="331.6" y="574" width="0.8" height="18" fill="#4a5b68" opacity=".55"/>
<rect x="336.2" y="574" width="0.8" height="18" fill="#4a5b68" opacity=".55"/>
<rect x="340.8" y="574" width="0.8" height="18" fill="#4a5b68" opacity=".55"/>
<rect x="345.4" y="574" width="0.8" height="18" fill="#4a5b68" opacity=".55"/>
<rect x="350" y="574" width="0.8" height="18" fill="#4a5b68" opacity=".55"/>
<rect x="354.6" y="574" width="0.8" height="18" fill="#4a5b68" opacity=".55"/>
<rect x="359.2" y="574" width="0.8" height="18" fill="#4a5b68" opacity=".55"/>
<rect x="363.8" y="574" width="0.8" height="18" fill="#4a5b68" opacity=".55"/>
<rect x="368.4" y="574" width="0.8" height="18" fill="#4a5b68" opacity=".55"/>
<rect x="373" y="574" width="0.8" height="18" fill="#4a5b68" opacity=".55"/>
<rect x="277" y="579.5" width="99" height="0.7" fill="#4a5b68" opacity=".45"/>
<rect x="277" y="584" width="99" height="0.7" fill="#4a5b68" opacity=".45"/>
<rect x="277" y="588.5" width="99" height="0.7" fill="#4a5b68" opacity=".45"/>
</g>
<text x="291" y="593" font-family="Liberation Sans,sans-serif" font-size="10" font-weight="bold" fill="#ffffff" textLength="75" lengthAdjust="spacing">New York City</text>
<rect x="124" y="597" width="344" height="13.5" fill="#0c1018"/>
<rect x="126" y="598" width="4.100" height="11" fill="url(#wing)"/>
<rect x="132.08" y="598" width="4.100" height="11" fill="url(#wing)"/>
<rect x="138.16" y="598" width="4.100" height="11" fill="url(#wing)"/>
<rect x="144.24" y="598" width="4.100" height="11" fill="url(#wing)"/>
<rect x="150.32" y="598" width="4.100" height="11" fill="url(#wing)"/>
<rect x="156.4" y="598" width="4.100" height="11" fill="url(#wing)"/>
<rect x="162.48" y="598" width="4.100" height="11" fill="url(#wing)"/>
<rect x="168.56" y="598" width="4.100" height="11" fill="url(#wing)"/>
<rect x="174.64" y="598" width="4.100" height="11" fill="url(#wing)"/>
<rect x="180.72" y="598" width="4.100" height="11" fill="url(#wing)"/>
<rect x="186.8" y="598" width="4.100" height="11" fill="url(#wing)"/>
<rect x="192.88" y="598" width="4.100" height="11" fill="url(#wing)"/>
<rect x="198.96" y="598" width="4.100" height="11" fill="url(#wing)"/>
<rect x="205.04" y="598" width="4.100" height="11" fill="url(#wing)"/>
<rect x="211.12" y="598" width="4.100" height="11" fill="url(#wing)"/>
<rect x="217.2" y="598" width="4.100" height="11" fill="url(#wing)"/>
<rect x="223.28" y="598" width="4.100" height="11" fill="url(#wing)"/>
<rect x="229.36" y="598" width="4.100" height="11" fill="url(#wing)"/>
<rect x="235.44" y="598" width="4.100" height="11" fill="url(#wing)"/>
<rect x="241.52" y="598" width="4.100" height="11" fill="url(#wing)"/>
<rect x="247.6" y="598" width="4.100" height="11" fill="url(#wing)"/>
<rect x="253.68" y="598" width="4.100" height="11" fill="url(#wing)"/>
<rect x="259.76" y="598" width="4.100" height="11" fill="url(#wing)"/>
<rect x="265.84" y="598" width="4.100" height="11" fill="url(#wing)"/>
<rect x="271.92" y="598" width="4.100" height="11" fill="url(#wing)"/>
<rect x="278" y="598" width="4.100" height="11" fill="url(#wing)"/>
<rect x="284.08" y="598" width="4.100" height="11" fill="url(#wing)"/>
<rect x="290.16" y="598" width="4.100" height="11" fill="url(#wing)"/>
<rect x="296.24" y="598" width="4.100" height="11" fill="url(#wing)"/>
<rect x="302.32" y="598" width="4.100" height="11" fill="url(#wing)"/>
<rect x="308.4" y="598" width="4.100" height="11" fill="url(#wing)"/>
<rect x="314.48" y="598" width="4.100" height="11" fill="url(#wing)"/>
<rect x="320.56" y="598" width="4.100" height="11" fill="url(#wing)"/>
<rect x="326.64" y="598" width="4.100" height="11" fill="url(#wing)"/>
<rect x="332.72" y="598" width="4.100" height="11" fill="url(#wing)"/>
<rect x="338.8" y="598" width="4.100" height="11" fill="url(#wing)"/>
<rect x="344.88" y="598" width="4.100" height="11" fill="url(#wing)"/>
<rect x="350.96" y="598" width="4.100" height="11" fill="url(#wing)"/>
<rect x="357.04" y="598" width="4.100" height="11" fill="url(#wing)"/>
<rect x="363.12" y="598" width="4.100" height="11" fill="url(#wing)"/>
<rect x="369.2" y="598" width="4.100" height="11" fill="url(#wing)"/>
<rect x="375.28" y="598" width="4.100" height="11" fill="url(#wing)"/>
<rect x="381.36" y="598" width="4.100" height="11" fill="url(#wing)"/>
<rect x="387.44" y="598" width="4.100" height="11" fill="url(#wing)"/>
<rect x="393.52" y="598" width="4.100" height="11" fill="url(#wing)"/>
<rect x="399.6" y="598" width="4.100" height="11" fill="url(#wing)"/>
<rect x="405.68" y="598" width="4.100" height="11" fill="url(#wing)"/>
<rect x="411.76" y="598" width="4.100" height="11" fill="url(#wing)"/>
<rect x="417.84" y="598" width="4.100" height="11" fill="url(#wing)"/>
<rect x="423.92" y="598" width="4.100" height="11" fill="url(#wing)"/>
<rect x="430" y="598" width="4.100" height="11" fill="url(#wing)"/>
<rect x="436.08" y="598" width="4.100" height="11" fill="url(#wing)"/>
<rect x="442.16" y="598" width="4.100" height="11" fill="url(#wing)"/>
<rect x="448.24" y="598" width="4.100" height="11" fill="url(#wing)"/>
<rect x="454.32" y="598" width="4.100" height="11" fill="url(#wing)"/>
<rect x="460.4" y="598" width="4.100" height="11" fill="url(#wing)"/>
<rect x="467.5" y="582" width="2.5" height="30" fill="#1c2230"/>
<rect x="8" y="610" width="989" height="64" fill="#0b1307"/>
<rect x="8" y="610" width="989" height="3" fill="#0a0e14"/>
<rect x="470" y="608" width="130" height="1.6" fill="#222c2e"/>
<defs><linearGradient id="b1" x1="0" x2="1" y1="0" y2="0"><stop offset="0" stop-color="#0f1732"/><stop offset=".6" stop-color="#0f1732"/><stop offset="1" stop-color="#0c131c"/></linearGradient></defs>
<path d="M8 613 H470 L997 616 V619.500 L470 616.200 H8 Z" fill="url(#b1)"/>
<rect x="8" y="616.2" width="989" height="5" fill="#0d1512"/>
<rect x="8" y="621" width="989" height="6" fill="#0b1110"/>
<rect x="8" y="627" width="989" height="5.5" fill="#0c1229"/>
<rect x="8" y="628" width="989" height="1" fill="#111939"/>
<rect x="8" y="631" width="989" height="1" fill="#111939"/>
<rect x="8" y="632.5" width="989" height="6.5" fill="#0b1020"/>
<path d="M8 639 H997 V646 H9 Z" fill="#0a1209"/>
<path d="M300 632.500 L560 632.500 L997 637 V664 L820 651 L640 638.700 L560 636.500 L330 634 Z" fill="#121a2e"/>
<path d="M560 627 L997 631.500 V637 L560 632.500 Z" fill="#0d1430"/>
<path d="M560 628 L997 632.500" stroke="#131b40" stroke-width="1" fill="none"/>
<path d="M300 640.500 L330 640.700 Q440 641 500 642.400 Q590 644.500 640 647.600 Q740 655 820 673 H543 Q525 667 500 662.700 Q420 648 330 642.500 L300 642 Z" fill="#10172a"/>
<path d="M330 641.500 Q430 643 520 652 Q600 661 680 673" stroke="#1a2234" stroke-width="1" fill="none"/>
<circle cx="14" cy="633" r="3.75" fill="url(#blue)"/>
<circle cx="73" cy="632" r="4" fill="url(#blue)"/>
<circle cx="143" cy="632" r="3.75" fill="url(#blue)"/>
<circle cx="213.8" cy="633" r="3.75" fill="url(#blue)"/>
<circle cx="304" cy="634" r="4" fill="url(#blue)"/>
<circle cx="63" cy="626.5" r="3" fill="url(#blue)"/>
<circle cx="134" cy="627" r="3" fill="url(#blue)"/>
<circle cx="204.4" cy="627.4" r="3.25" fill="url(#blue)"/>
<circle cx="273" cy="627" r="3" fill="url(#blue)"/>
<circle cx="344" cy="627" r="3" fill="url(#blue)"/>
<circle cx="412" cy="628" r="3.25" fill="url(#blue)"/>
<circle cx="400" cy="638" r="4.5" fill="url(#blue)"/>
<circle cx="494" cy="629" r="3.5" fill="url(#blue)"/>
<circle cx="572" cy="629" r="3.75" fill="url(#blue)"/>
<circle cx="650" cy="631" r="3.75" fill="url(#blue)"/>
<circle cx="731" cy="634" r="4" fill="url(#blue)"/>
<circle cx="829" cy="638" r="4.375" fill="url(#blue)"/>
<rect x="110" y="643" width="10" height="9" fill="#4e4210"/>
<rect x="112" y="645" width="6" height="5" fill="#121208"/>
<rect x="114.5" y="652" width="1" height="5" fill="#1a1a1a"/>
<rect x="16.5" y="629" width="1" height="14" fill="#1c2233"/>
<rect x="51" y="629" width="1" height="24" fill="#1c2233"/>
<circle cx="17" cy="626" r="2.600" fill="none" stroke="#04050a" stroke-width="1.400"/><circle cx="51" cy="626" r="2.600" fill="none" stroke="#04050a" stroke-width="1.400"/>
<rect x="894.6" y="574" width="1" height="18" fill="#b8b8b8"/>
<g transform="rotate(-9 894 560)"><path d="M890.500 560 L898.500 560 L898 565 L891 565 Z" fill="#e8481e"/><path d="M891 565 L898 565 L897.600 570 L891.500 570 Z" fill="#f6e8dc"/><path d="M891.500 570 L897.600 570 L897.200 575 L892 575 Z" fill="#e8481e"/><path d="M892 575 L897.200 575 L896.800 580 L892.500 580 Z" fill="#f6e8dc"/><path d="M892.500 580 L896.800 580 L896.500 585 L893 585 Z" fill="#e8481e"/></g>
<rect x="887" y="605" width="1.4" height="4" fill="#d0d0d0"/>
<rect x="889.5" y="605" width="1.4" height="4" fill="#d0d0d0"/>
<g transform="translate(25,657)"><defs><radialGradient id="ball" cx=".4" cy=".35" r=".75"><stop offset="0" stop-color="#bdbdbd"/><stop offset=".7" stop-color="#959595"/><stop offset="1" stop-color="#585858"/></radialGradient></defs>
<circle r="15" fill="url(#ball)"/>
<path d="M-7 -10 L1 -11 L4 -5 L-2 -1 L-8 -4 Z" fill="#1c1e22"/>
<path d="M1 6 L8 3 L11 9 L6 13 L0 12 Z" fill="#1c1e22"/>
<path d="M-14 2 L-11 1 L-8 7 L-11 11 Z" fill="#1c1e22"/>
<path d="M11 -9 L14 -4 L13 -1 L9 -5 Z" fill="#1c1e22"/>
<path d="M-2 -1 L1 6 M4 -5 L9 -5 M-8 -4 L-11 1 M-8 7 L0 12 M8 3 L9 -5" stroke="#858585" stroke-width=".8" fill="none"/></g>
</svg>
<style>
.tb{position:absolute;top:54px;height:40px;background:rgba(154,156,158,.74);}
.sep{position:absolute;top:54px;height:40px;width:4px;background:#b9bbc0;}
.t{position:absolute;white-space:nowrap;font-family:"DejaVu Sans Condensed","Liberation Sans",sans-serif;color:#1d2027;line-height:1;}
.fc{position:absolute;top:96px;height:80px;background:#7a7b84;}
.fsep{position:absolute;top:96px;height:80px;width:2px;background:rgba(190,194,201,.8);}
</style>
<!-- toolbar -->
<div class="abs" style="left:10px;top:54px;width:70px;height:40px;background:#2fa800;border-radius:5px 0 0 5px;"></div>
<div class="sep" style="left:80px"></div>
<div class="tb" style="left:84px;width:89px"></div>
<div class="sep" style="left:173px"></div>
<div class="tb" style="left:177px;width:176px"></div>
<svg class="abs" style="left:186px;top:64px" width="160" height="20"><path d="M10 2 L10 18 L2 10 Z M148 2 L148 18 L156 10 Z" fill="#fff"/></svg>
<div class="sep" style="left:353px"></div>
<div class="tb" style="left:357px;width:638px;border-radius:0 5px 5px 0"></div>
<div class="abs" style="left:370px;top:79px;width:612px;height:14px;border-radius:7px;background:rgba(255,255,255,.09)"></div>
<!-- time marker -->
<div class="abs" style="left:484px;top:54px;width:4px;height:26px;background:#3aa818"></div>
<svg class="abs" style="left:476px;top:76px" width="22" height="22"><defs><radialGradient id="gb" cx=".4" cy=".35" r=".7"><stop offset="0" stop-color="#6fd84a"/><stop offset=".6" stop-color="#3cb01a"/><stop offset="1" stop-color="#2a8a10"/></radialGradient></defs><circle cx="10.2" cy="10" r="7.800" fill="url(#gb)"/></svg>
<!--TLICONS--><svg class="abs" style="left:400px;top:54px" width="500" height="40" viewBox="400 54 500 40"><g fill="#dcdde0"><path d="M417.59 70.80 C414.58 70.80 412.90 68.79 412.90 66.44 C412.90 64.10 414.91 62.22 417.59 62.49 C418.60 59.41 421.61 57.40 425.30 57.40 C429.32 57.40 432.00 59.74 432.67 62.76 C435.35 62.76 437.70 64.44 437.70 67.11 C437.70 69.46 435.69 70.80 433.34 70.80 Z"/><path d="M414.300 74.500 q5.500 -1.600 11 0 q5.500 1.600 10.500 -0.300" fill="none" stroke="#dcdde0" stroke-width="2.200" stroke-linecap="round"/><path d="M467.60 56.98 A7.90 7.90 0 1 1 459.46 70.26 A8.19 8.19 0 0 0 467.60 56.98 Z"/><path d="M469.92 77.20 C467.91 77.20 466.80 75.91 466.80 74.41 C466.80 72.90 468.14 71.70 469.92 71.87 C470.59 69.89 472.60 68.60 475.05 68.60 C477.73 68.60 479.51 70.10 479.96 72.04 C481.74 72.04 483.30 73.11 483.30 74.83 C483.30 76.34 481.96 77.20 480.40 77.20 Z"/><path d="M793.14 74.00 C789.96 74.00 788.20 71.83 788.20 69.29 C788.20 66.75 790.32 64.72 793.14 65.01 C794.20 61.67 797.37 59.50 801.25 59.50 C805.48 59.50 808.30 62.04 809.01 65.30 C811.83 65.30 814.30 67.11 814.30 70.01 C814.30 72.55 812.18 74.00 809.71 74.00 Z"/><path d="M873.17 57.17 A7.80 7.80 0 1 1 865.13 70.29 A8.09 8.09 0 0 0 873.17 57.17 Z"/><path d="M874.94 77.10 C872.92 77.10 871.80 75.78 871.80 74.24 C871.80 72.70 873.15 71.47 874.94 71.64 C875.61 69.62 877.63 68.30 880.10 68.30 C882.79 68.30 884.59 69.84 885.04 71.82 C886.83 71.82 888.40 72.92 888.40 74.68 C888.40 76.22 887.05 77.10 885.48 77.10 Z"/></g></svg><!--/TLICONS-->
<!-- forecast -->
<div class="fc" style="left:10px;width:50px;border-radius:5px 0 0 5px"></div><div class="fsep" style="left:60px"></div>
<div class="fc" style="left:62px;width:50px"></div><div class="fsep" style="left:112px"></div>
<div class="fc" style="left:114px;width:50px"></div><div class="fsep" style="left:164px"></div>
<div class="fc" style="left:166px;width:21px;border-radius:0 5px 5px 0"></div>
<svg class="abs" style="left:170px;top:128px" width="14" height="18"><path d="M2 2 L2 16 L12 9 Z" fill="#fff"/></svg>
<!--FCICONS--><svg class="abs" style="left:10px;top:140px" width="160" height="36" viewBox="10 140 160 36"><defs><filter id="ds1" x="-20%" y="-20%" width="150%" height="150%"><feDropShadow dx="0.8" dy="0.8" stdDeviation=".5" flood-color="#30343c" flood-opacity=".8"/></filter></defs><g fill="#fff" filter="url(#ds1)"><circle cx="35.2" cy="158.3" r="8.3"/><path d="M33.41 149.07 L36.99 149.07 L35.20 145.70 Z M38.26 149.41 L41.37 151.21 L41.50 147.39 Z M42.29 152.13 L44.09 155.24 L46.11 152.00 Z M44.43 156.51 L44.43 160.09 L47.80 158.30 Z M44.09 161.36 L42.29 164.47 L46.11 164.60 Z M41.37 165.39 L38.26 167.19 L41.50 169.21 Z M36.99 167.53 L33.41 167.53 L35.20 170.90 Z M32.14 167.19 L29.03 165.39 L28.90 169.21 Z M28.11 164.47 L26.31 161.36 L24.29 164.60 Z M25.97 160.09 L25.97 156.51 L22.60 158.30 Z M26.31 155.24 L28.11 152.13 L24.29 152.00 Z M29.03 151.21 L32.14 149.41 L28.90 147.39 Z "/><circle cx="80" cy="156.7" r="6.6"/><circle cx="80.00" cy="148.00" r="1.1"/><circle cx="84.35" cy="149.17" r="1.1"/><circle cx="87.53" cy="152.35" r="1.1"/><circle cx="88.70" cy="156.70" r="1.1"/><circle cx="87.53" cy="161.05" r="1.1"/><circle cx="84.35" cy="164.23" r="1.1"/><circle cx="80.00" cy="165.40" r="1.1"/><circle cx="75.65" cy="164.23" r="1.1"/><circle cx="72.47" cy="161.05" r="1.1"/><circle cx="71.30" cy="156.70" r="1.1"/><circle cx="72.47" cy="152.35" r="1.1"/><circle cx="75.65" cy="149.17" r="1.1"/><path d="M88.93 169.00 C86.79 169.00 85.60 167.50 85.60 165.75 C85.60 164.00 87.03 162.60 88.93 162.80 C89.64 160.50 91.78 159.00 94.40 159.00 C97.25 159.00 99.16 160.75 99.63 163.00 C101.54 163.00 103.20 164.25 103.20 166.25 C103.20 168.00 101.77 169.00 100.11 169.00 Z"/><circle cx="131.8" cy="156.7" r="6.6"/><circle cx="131.80" cy="148.00" r="1.1"/><circle cx="136.15" cy="149.17" r="1.1"/><circle cx="139.33" cy="152.35" r="1.1"/><circle cx="140.50" cy="156.70" r="1.1"/><circle cx="139.33" cy="161.05" r="1.1"/><circle cx="136.15" cy="164.23" r="1.1"/><circle cx="131.80" cy="165.40" r="1.1"/><circle cx="127.45" cy="164.23" r="1.1"/><circle cx="124.27" cy="161.05" r="1.1"/><circle cx="123.10" cy="156.70" r="1.1"/><circle cx="124.27" cy="152.35" r="1.1"/><circle cx="127.45" cy="149.17" r="1.1"/><path d="M140.73 169.00 C138.59 169.00 137.40 167.50 137.40 165.75 C137.40 164.00 138.83 162.60 140.73 162.80 C141.44 160.50 143.58 159.00 146.20 159.00 C149.05 159.00 150.96 160.75 151.43 163.00 C153.34 163.00 155.00 164.25 155.00 166.25 C155.00 168.00 153.57 169.00 151.91 169.00 Z"/></g></svg><!--/FCICONS-->
<!-- details -->
<div class="abs" style="left:397px;top:99px;width:118px;height:36px;border-radius:5px;background:#7c7e86"></div>
<svg class="abs" style="left:400px;top:102px" width="30" height="30"><circle cx="15.1" cy="15.2" r="13.4" fill="#fff"/><circle cx="15" cy="8.6" r="2.3" fill="#123a86"/><path d="M12.300 13.400 H17 V23.800 H13.100 V15.200 H12.300 Z" fill="#123a86"/></svg>
<!-- weather panel -->
<div class="abs" style="left:725px;top:96px;width:270px;height:30px;border-radius:4px 4px 0 0;background:#989aa3"></div>
<div class="abs" style="left:965.5px;top:97.5px;width:29.5px;height:27.5px;border-radius:4px;background:#8f9199;box-shadow:-1px 1px 1px rgba(70,74,84,.5)"></div>
<div class="abs" style="left:725px;top:125.700px;width:270px;height:224.300px;border-radius:0 0 4px 4px;background:#7b7d86"></div>
<svg class="abs" style="left:940px;top:96px" width="56" height="30" viewBox="940 96 56 30"><path d="M943.700 106.700 H955.300 L949.500 117.900 Z" fill="#fff" stroke="#3c3e48" stroke-opacity=".55" stroke-width="1"/><path d="M980.500 100.900 V119.800 M971 110.100 H990" stroke="#fff" stroke-width="4.200" fill="none"/></svg>
<!--WPICONS--><svg class="abs" style="left:725px;top:130px" width="270" height="180" viewBox="725 130 270 180"><defs><filter id="ds2" x="-20%" y="-20%" width="150%" height="150%"><feDropShadow dx="1.800" dy="1.800" stdDeviation="1.100" flood-color="#15171c" flood-opacity=".85"/></filter></defs><g fill="#fff" filter="url(#ds2)"><path d="M852.20 181.90 A16.30 16.30 0 1 1 835.40 209.30 A16.90 16.90 0 0 0 852.20 181.90 Z"/><path d="M856.58 227.30 C852.09 227.30 849.60 224.28 849.60 220.77 C849.60 217.25 852.59 214.44 856.58 214.84 C858.08 210.21 862.56 207.20 868.05 207.20 C874.03 207.20 878.02 210.72 879.02 215.24 C883.01 215.24 886.50 217.75 886.50 221.77 C886.50 225.29 883.51 227.30 880.02 227.30 Z"/></g><g fill="#fff"><circle cx="735" cy="147.600" r="2.100"/><path d="M732.300 150.400 H737.700 Q739.200 150.400 739.500 152 L740.300 157.800 L738.800 158.100 L738 153.800 V164 H735.500 V158.200 H734.500 V164 H732 V153.800 L731.200 158.100 L729.700 157.800 L730.500 152 Q730.800 150.400 732.300 150.400 Z"/></g><g fill="none" stroke="#16181d" stroke-width="1.600" stroke-linecap="round" stroke-linejoin="round"><path d="M871.400 261.400 L865 277.700 M861.500 272.400 L865 277.700 L870.600 275.600"/><path d="M891.700 292.800 H910 M904.600 288.300 L910 292.800 L904.600 297.400"/></g></svg><!--/WPICONS-->
<!-- bottom -->
<div class="abs" style="left:8px;top:673px;width:989px;height:19px;background:#000"></div>
<div class="abs" style="left:961px;top:637px;width:34px;height:34px;border-radius:4px;background:#85878b"></div>
<svg class="abs" style="left:961px;top:637px" width="34" height="34"><g stroke="#fff" stroke-width="2" fill="#fff" stroke-linecap="round"><path d="M7 7 L13 13 M27 7 L21 13 M7 27 L13 21 M27 27 L21 21" fill="none"/><path d="M5.5 5.500 h6 l-6 6 Z M28.500 5.500 h-6 l6 6 Z M5.500 28.500 h6 l-6 -6 Z M28.500 28.500 h-6 l6 -6 Z" stroke="none"/></g></svg>
<div class="t" style="left:22.20px;top:65.16px;font-size:21px;letter-spacing:0.005px;color:#fff;font-weight:bold;">LIVE</div>
<div class="t" style="left:93.80px;top:64.97px;font-size:19.8px;letter-spacing:-0.213px;color:#24272e;">4:26 AM</div>
<div class="t" style="left:216.20px;top:64.97px;font-size:19.8px;letter-spacing:0.099px;color:#24272e;"><span style="color:#c0473a">Su</span>, Aug 24</div>
<div class="t" style="left:375.30px;top:79.85px;font-size:12.8px;letter-spacing:0.306px;color:#4d5058;">12 AM</div>
<div class="t" style="left:511.40px;top:79.85px;font-size:12.8px;letter-spacing:0.383px;color:#4d5058;">6 AM</div>
<div class="t" style="left:586.60px;top:79.85px;font-size:12.8px;letter-spacing:0.283px;color:#4d5058;">9 AM</div>
<div class="t" style="left:737.96px;top:79.85px;font-size:12.8px;letter-spacing:0.650px;color:#4d5058;">3 PM</div>
<div class="t" style="left:888.20px;top:79.85px;font-size:12.8px;letter-spacing:0.493px;color:#4d5058;">9 PM</div>
<div class="t" style="left:590.30px;top:61.87px;font-size:14.2px;letter-spacing:-0.019px;color:#4d5058;">68°</div>
<div class="t" style="left:739.78px;top:61.87px;font-size:14.2px;letter-spacing:0.650px;color:#4d5058;">79°</div>
<div class="t" style="left:898.40px;top:61.87px;font-size:14.2px;letter-spacing:0.281px;color:#4d5058;">73°</div>
<div class="t" style="left:22.40px;top:99.01px;font-size:18.8px;letter-spacing:0.139px;color:#5a5d66;">mo</div>
<div class="t" style="left:79.31px;top:99.01px;font-size:18.8px;letter-spacing:0.650px;color:#5a5d66;">tu</div>
<div class="t" style="left:128.20px;top:99.01px;font-size:18.8px;letter-spacing:0.380px;color:#5a5d66;">we</div>
<div class="t" style="left:24.20px;top:123.54px;font-size:19px;letter-spacing:-0.173px;color:#16181e;">83</div>
<div class="t" style="left:76.20px;top:123.54px;font-size:19px;letter-spacing:0.327px;color:#16181e;">83</div>
<div class="t" style="left:128.00px;top:123.54px;font-size:19px;letter-spacing:-0.073px;color:#16181e;">81</div>
<div class="t" style="left:435.00px;top:107.98px;font-size:19.9px;letter-spacing:-0.323px;color:#22252c;">Details...</div>
<div class="t" style="left:730.70px;top:102.17px;font-size:19.2px;letter-spacing:0.494px;color:#16181e;">New York City</div>
<div class="t" style="left:742.48px;top:145.20px;font-size:20px;letter-spacing:-0.400px;color:#16181e;">66</div>
<div class="t" style="left:807.00px;top:131.38px;font-size:50.5px;letter-spacing:-0.036px;color:#111318;">66°F</div>
<div class="t" style="left:969.00px;top:138.08px;font-size:18.6px;letter-spacing:-0.341px;color:#16181e;">80</div>
<div class="t" style="left:969.00px;top:160.08px;font-size:18.6px;letter-spacing:-0.341px;color:#16181e;">61</div>
<div class="t" style="left:845.40px;top:237.88px;font-size:18px;letter-spacing:0.438px;color:#16181e;">Fair</div>
<div class="t" style="left:731.00px;top:260.66px;font-size:18.5px;letter-spacing:0.551px;color:#16181e;">Wind:</div>
<div class="t" style="left:795.20px;top:260.66px;font-size:18.5px;letter-spacing:0.536px;color:#16181e;">6 mph</div>
<div class="t" style="left:730.50px;top:284.76px;font-size:18.5px;letter-spacing:0.568px;color:#16181e;">Pressure:</div>
<div class="t" style="left:825.50px;top:284.76px;font-size:18.5px;letter-spacing:0.414px;color:#16181e;">30.08"</div>
<div class="t" style="left:730.50px;top:308.96px;font-size:18.5px;letter-spacing:0.422px;color:#16181e;">Humidity:</div>
<div class="t" style="left:829.66px;top:308.96px;font-size:18.5px;letter-spacing:0.650px;color:#16181e;">83%</div>
<div class="t" style="left:731.00px;top:331.98px;font-size:13px;letter-spacing:0.216px;color:#16181e;">Observed:</div>
<div class="t" style="left:803.60px;top:331.98px;font-size:13px;letter-spacing:0.344px;color:#16181e;">35 m ago</div>
<div class="t" style="left:352.90px;top:675.91px;font-size:13.8px;letter-spacing:0.220px;color:#9a9a9a;">Forecast from National Weather Service (<span style="color:#3c9a22">NWS</span>)</div>

</body>
</html>
